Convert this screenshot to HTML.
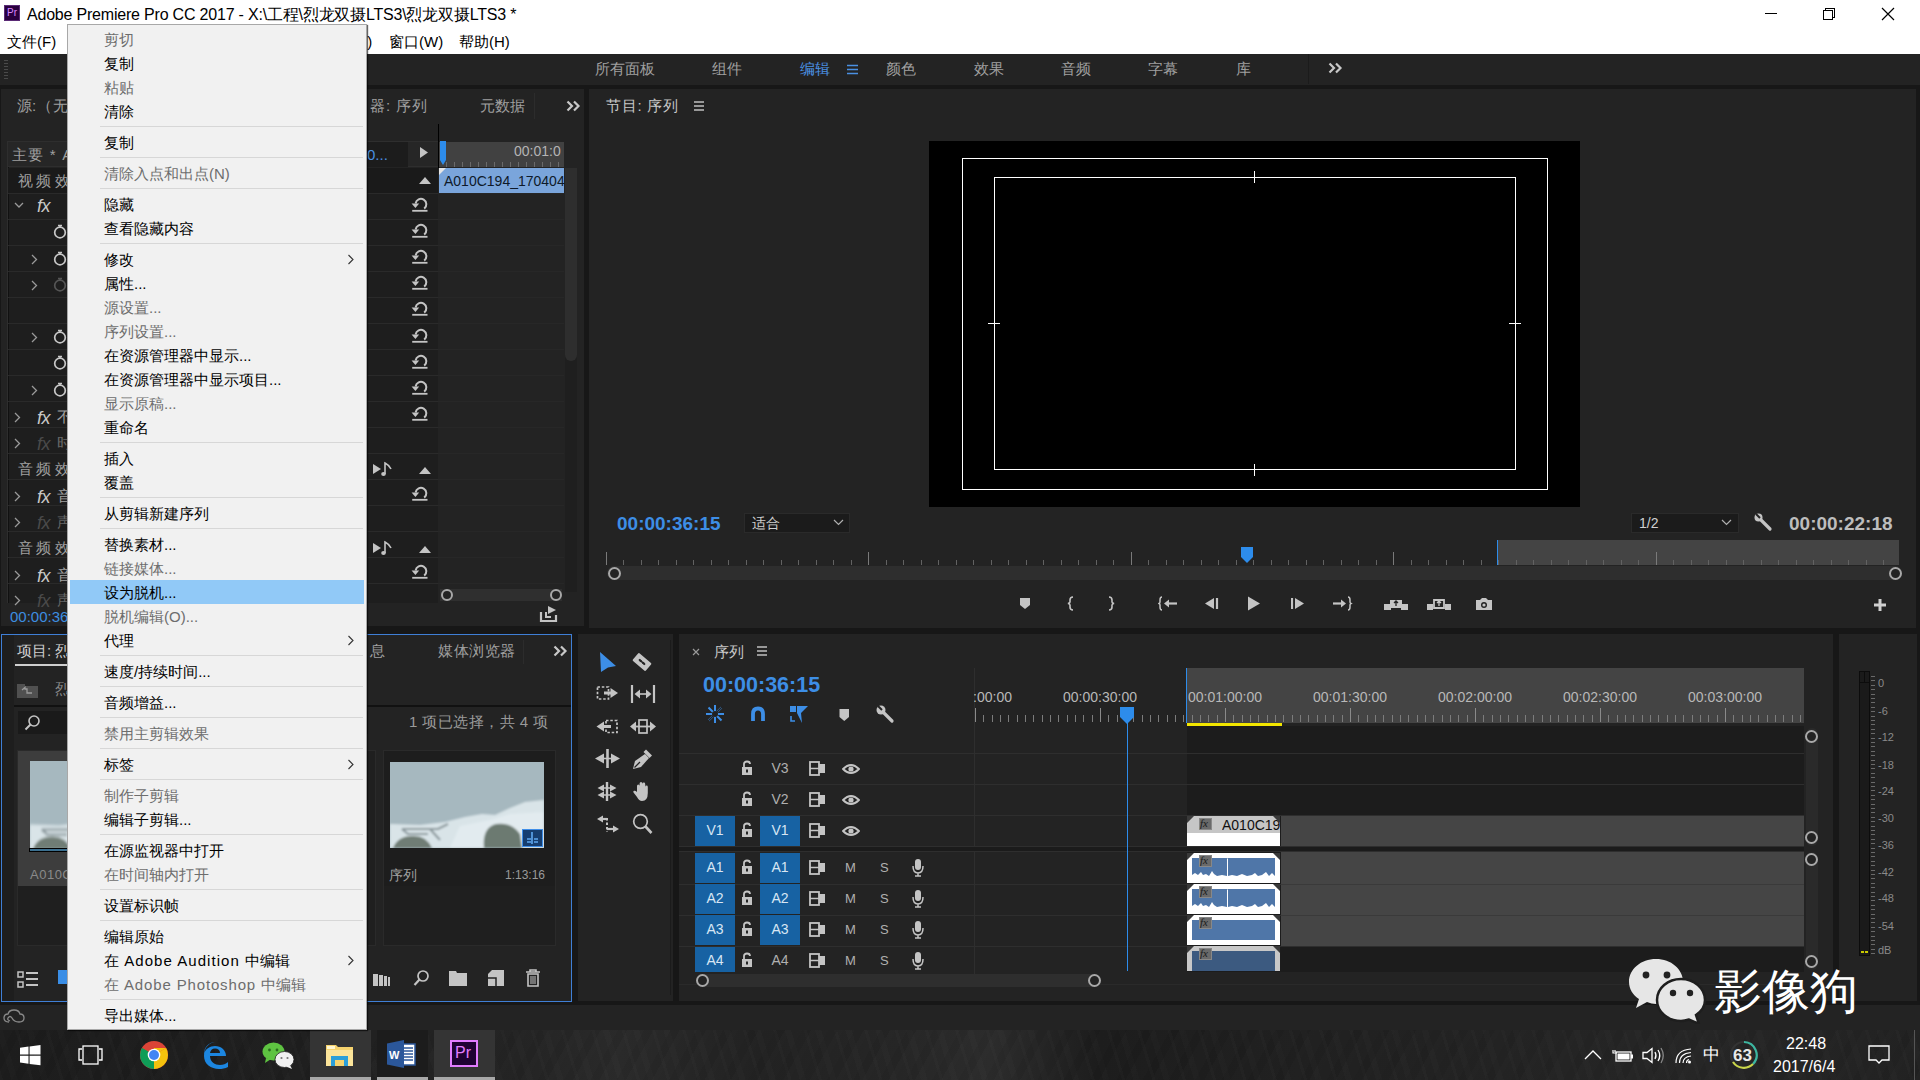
<!DOCTYPE html>
<html><head><meta charset="utf-8">
<style>
*{margin:0;padding:0;box-sizing:border-box}
html,body{width:1920px;height:1080px;overflow:hidden;background:#171717;font-family:"Liberation Sans",sans-serif;}
.a{position:absolute}
.t{position:absolute;white-space:nowrap;line-height:1}
.panel{position:absolute;background:#232323}
.g{color:#a9a9a9}
.mi{left:104px;font-size:15px;margin-top:1px}
</style></head><body>

<!-- title bar -->
<div class="a" style="left:0;top:0;width:1920px;height:54px;background:#fff"></div>
<div class="a" style="left:4px;top:5px;width:16px;height:16px;background:#2a003f;border:1px solid #5a2a75"></div>
<div class="t" style="left:7px;top:8px;font-size:10px;color:#d987ff">Pr</div>
<div class="t" style="left:27px;top:7px;font-size:16px;color:#000;letter-spacing:-0.2px">Adobe Premiere Pro CC 2017 - X:\工程\烈龙双摄LTS3\烈龙双摄LTS3 *</div>
<div class="t" style="left:7px;top:34px;font-size:15px;color:#000">文件(F)</div>
<div class="t" style="left:358px;top:34px;font-size:15px;color:#000">T)</div>
<div class="t" style="left:389px;top:34px;font-size:15px;color:#000">窗口(W)</div>
<div class="t" style="left:459px;top:34px;font-size:15px;color:#000">帮助(H)</div>
<!-- window buttons -->
<div class="a" style="left:1765px;top:13px;width:12px;height:1px;background:#000"></div>
<div class="a" style="left:1825px;top:8px;width:10px;height:10px;border:1px solid #000;background:#fff"></div>
<div class="a" style="left:1823px;top:10px;width:10px;height:10px;border:1px solid #000;background:#fff"></div>
<svg class="a" style="left:1881px;top:7px" width="14" height="14"><path d="M1 1L13 13M13 1L1 13" stroke="#000" stroke-width="1.2"/></svg>

<!-- workspace bar -->
<div class="a" style="left:0;top:54px;width:1920px;height:31px;background:#232323"></div>



<!-- workspace tabs -->
<div class="t g" style="left:595px;top:61px;font-size:15px;color:#a0a0a0;letter-spacing:0px">所有面板</div>
<div class="t g" style="left:712px;top:61px;font-size:15px;color:#a0a0a0">组件</div>
<div class="t" style="left:800px;top:61px;font-size:15px;color:#4a90e2">编辑</div>
<svg class="a" style="left:847px;top:64px" width="12" height="11"><path d="M0 1.5H11M0 5.5H11M0 9.5H11" stroke="#4a90e2" stroke-width="1.6"/></svg>
<div class="t g" style="left:886px;top:61px;font-size:15px;color:#a0a0a0">颜色</div>
<div class="t g" style="left:974px;top:61px;font-size:15px;color:#a0a0a0">效果</div>
<div class="t g" style="left:1061px;top:61px;font-size:15px;color:#a0a0a0">音频</div>
<div class="t g" style="left:1148px;top:61px;font-size:15px;color:#a0a0a0">字幕</div>
<div class="t g" style="left:1236px;top:61px;font-size:15px;color:#a0a0a0">库</div>
<div class="a" style="left:1308px;top:54px;width:1px;height:30px;background:#1b1b1b"></div>
<svg class="a" style="left:1328px;top:62px" width="15" height="12"><path d="M1.5 1.5L6 6L1.5 10.5M8 1.5L12.5 6L8 10.5" fill="none" stroke="#c8c8c8" stroke-width="2.2"/></svg>
<div class="a" style="left:4px;top:60px;width:4px;height:20px;background:repeating-linear-gradient(#4a4a4a 0 1px,transparent 1px 3px)"></div>

<!-- panels -->
<div class="panel" style="left:1px;top:89px;width:583px;height:537px"></div>
<div class="a" style="left:7px;top:141px;width:1px;height:462px;background:#2e2e2e"></div><div class="a" style="left:8px;top:141px;width:1px;height:462px;background:#111"></div>
<div class="panel" style="left:589px;top:89px;width:1327px;height:539px"></div>
<div class="panel" style="left:1px;top:634px;width:571px;height:368px;border:1px solid #3f7fd6"></div>
<div class="panel" style="left:578px;top:634px;width:95px;height:367px"></div>
<div class="panel" style="left:679px;top:634px;width:1154px;height:367px"></div>
<div class="panel" style="left:1839px;top:634px;width:78px;height:367px"></div>
<!-- status bar -->
<div class="a" style="left:0;top:1005px;width:1920px;height:25px;background:#232323"></div>
<!-- taskbar -->
<div class="a" style="left:0;top:1030px;width:1920px;height:50px;background:#1d1d1d"></div>
<!-- effect controls -->
<div class="t" style="left:17px;top:98px;font-size:15px;color:#a0a0a0">源</div><div class="t" style="left:32px;top:98px;font-size:15px;color:#a0a0a0">:</div><div class="t" style="left:37px;top:98px;font-size:15px;color:#a0a0a0">（</div><div class="t" style="left:53px;top:98px;font-size:15px;color:#a0a0a0">无</div>
<div class="t" style="left:370px;top:98px;font-size:15px;color:#a0a0a0;letter-spacing:1px">器: 序列</div>
<div class="t" style="left:480px;top:98px;font-size:15px;color:#a0a0a0">元数据</div>
<div class="a" style="left:534px;top:93px;width:1px;height:26px;background:#2c2c2c"></div>
<svg class="a" style="left:566px;top:100px" width="15" height="12"><path d="M1.5 1.5L6 6L1.5 10.5M8 1.5L12.5 6L8 10.5" fill="none" stroke="#c8c8c8" stroke-width="2.2"/></svg>
<div class="a" style="left:8px;top:141px;width:430px;height:26px;background:#262626;border-top:1px solid #2e2e2e;border-bottom:1px solid #2e2e2e"></div>
<div class="a" style="left:367px;top:142px;width:41px;height:25px;background:#1c1c1c"></div>
<div class="a" style="left:9px;top:168px;width:429px;height:435px;background:#1e1e1e"></div>
<div class="a" style="left:8px;top:193px;width:430px;height:1px;background:#2a2a2a"></div>
<div class="a" style="left:8px;top:219px;width:430px;height:1px;background:#2a2a2a"></div>
<div class="a" style="left:8px;top:245px;width:430px;height:1px;background:#2a2a2a"></div>
<div class="a" style="left:8px;top:271px;width:430px;height:1px;background:#2a2a2a"></div>
<div class="a" style="left:8px;top:297px;width:430px;height:1px;background:#2a2a2a"></div>
<div class="a" style="left:8px;top:323px;width:430px;height:1px;background:#2a2a2a"></div>
<div class="a" style="left:8px;top:349px;width:430px;height:1px;background:#2a2a2a"></div>
<div class="a" style="left:8px;top:375px;width:430px;height:1px;background:#2a2a2a"></div>
<div class="a" style="left:8px;top:401px;width:430px;height:1px;background:#2a2a2a"></div>
<div class="a" style="left:8px;top:427px;width:430px;height:1px;background:#2a2a2a"></div>
<div class="a" style="left:8px;top:453px;width:430px;height:1px;background:#2a2a2a"></div>
<div class="a" style="left:8px;top:479px;width:430px;height:1px;background:#2a2a2a"></div>
<div class="a" style="left:8px;top:505px;width:430px;height:1px;background:#2a2a2a"></div>
<div class="a" style="left:8px;top:531px;width:430px;height:1px;background:#2a2a2a"></div>
<div class="a" style="left:8px;top:557px;width:430px;height:1px;background:#2a2a2a"></div>
<div class="a" style="left:8px;top:583px;width:430px;height:1px;background:#2a2a2a"></div>

<div class="a" style="left:438px;top:193px;width:126px;height:1px;background:#272727"></div>
<div class="a" style="left:438px;top:219px;width:126px;height:1px;background:#272727"></div>
<div class="a" style="left:438px;top:245px;width:126px;height:1px;background:#272727"></div>
<div class="a" style="left:438px;top:271px;width:126px;height:1px;background:#272727"></div>
<div class="a" style="left:438px;top:297px;width:126px;height:1px;background:#272727"></div>
<div class="a" style="left:438px;top:323px;width:126px;height:1px;background:#272727"></div>
<div class="a" style="left:438px;top:349px;width:126px;height:1px;background:#272727"></div>
<div class="a" style="left:438px;top:375px;width:126px;height:1px;background:#272727"></div>
<div class="a" style="left:438px;top:401px;width:126px;height:1px;background:#272727"></div>
<div class="a" style="left:438px;top:427px;width:126px;height:1px;background:#272727"></div>
<div class="a" style="left:438px;top:453px;width:126px;height:1px;background:#272727"></div>
<div class="a" style="left:438px;top:479px;width:126px;height:1px;background:#272727"></div>
<div class="a" style="left:438px;top:505px;width:126px;height:1px;background:#272727"></div>
<div class="a" style="left:438px;top:531px;width:126px;height:1px;background:#272727"></div>
<div class="a" style="left:438px;top:557px;width:126px;height:1px;background:#272727"></div>
<div class="a" style="left:438px;top:583px;width:126px;height:1px;background:#272727"></div>
<div class="t" style="left:12px;top:147px;font-size:15px;color:#a0a0a0;letter-spacing:1.2px">主要 * A</div>
<div class="t" style="left:367px;top:147px;font-size:15px;color:#4a90e2">0...</div>
<svg class="a" style="left:420px;top:147px" width="9" height="11"><path d="M0 0L8 5.5L0 11Z" fill="#c4c4c4"/></svg>
<div class="a" style="left:8px;top:168px;width:430px;height:25px;background:#1a1a1a"></div>
<div class="t" style="left:18px;top:173px;font-size:15px;color:#a0a0a0;letter-spacing:3.4px">视频效果</div>
<svg class="a" style="left:14px;top:202px" width="10" height="7"><path d="M1 1L5 5L9 1" fill="none" stroke="#9a9a9a" stroke-width="1.3"/></svg>
<div class="t" style="left:37px;top:197px;font-size:18px;font-style:italic;color:#c8c8c8;letter-spacing:-0.5px">fx</div>
<svg class="a" style="left:53px;top:224px" width="14" height="15"><circle cx="7" cy="8.5" r="5.3" fill="none" stroke="#c8c8c8" stroke-width="1.7"/><path d="M5 1.5H9M7 1.5V3.5" stroke="#c8c8c8" stroke-width="1.5"/></svg>
<svg class="a" style="left:53px;top:251px" width="14" height="15"><circle cx="7" cy="8.5" r="5.3" fill="none" stroke="#c8c8c8" stroke-width="1.7"/><path d="M5 1.5H9M7 1.5V3.5" stroke="#c8c8c8" stroke-width="1.5"/></svg>
<svg class="a" style="left:53px;top:277px" width="14" height="15"><circle cx="7" cy="8.5" r="5.3" fill="none" stroke="#555" stroke-width="1.7"/><path d="M5 1.5H9M7 1.5V3.5" stroke="#555" stroke-width="1.5"/></svg>
<svg class="a" style="left:53px;top:329px" width="14" height="15"><circle cx="7" cy="8.5" r="5.3" fill="none" stroke="#c8c8c8" stroke-width="1.7"/><path d="M5 1.5H9M7 1.5V3.5" stroke="#c8c8c8" stroke-width="1.5"/></svg>
<svg class="a" style="left:53px;top:355px" width="14" height="15"><circle cx="7" cy="8.5" r="5.3" fill="none" stroke="#c8c8c8" stroke-width="1.7"/><path d="M5 1.5H9M7 1.5V3.5" stroke="#c8c8c8" stroke-width="1.5"/></svg>
<svg class="a" style="left:53px;top:382px" width="14" height="15"><circle cx="7" cy="8.5" r="5.3" fill="none" stroke="#c8c8c8" stroke-width="1.7"/><path d="M5 1.5H9M7 1.5V3.5" stroke="#c8c8c8" stroke-width="1.5"/></svg>
<svg class="a" style="left:31px;top:254px" width="7" height="11"><path d="M1 1L5.5 5.5L1 10" fill="none" stroke="#9a9a9a" stroke-width="1.3"/></svg>
<svg class="a" style="left:31px;top:280px" width="7" height="11"><path d="M1 1L5.5 5.5L1 10" fill="none" stroke="#9a9a9a" stroke-width="1.3"/></svg>
<svg class="a" style="left:31px;top:332px" width="7" height="11"><path d="M1 1L5.5 5.5L1 10" fill="none" stroke="#9a9a9a" stroke-width="1.3"/></svg>
<svg class="a" style="left:31px;top:385px" width="7" height="11"><path d="M1 1L5.5 5.5L1 10" fill="none" stroke="#9a9a9a" stroke-width="1.3"/></svg>
<svg class="a" style="left:14px;top:412px" width="7" height="11"><path d="M1 1L5.5 5.5L1 10" fill="none" stroke="#9a9a9a" stroke-width="1.3"/></svg>
<div class="t" style="left:37px;top:409px;font-size:18px;font-style:italic;color:#c8c8c8;letter-spacing:-0.5px">fx</div>
<div class="t" style="left:57px;top:409px;font-size:15px;color:#a0a0a0">不</div>
<svg class="a" style="left:14px;top:438px" width="7" height="11"><path d="M1 1L5.5 5.5L1 10" fill="none" stroke="#9a9a9a" stroke-width="1.3"/></svg>
<div class="t" style="left:37px;top:435px;font-size:18px;font-style:italic;color:#4a4a4a;letter-spacing:-0.5px">fx</div>
<div class="t" style="left:57px;top:435px;font-size:15px;color:#666">时</div>
<svg class="a" style="left:14px;top:491px" width="7" height="11"><path d="M1 1L5.5 5.5L1 10" fill="none" stroke="#9a9a9a" stroke-width="1.3"/></svg>
<div class="t" style="left:37px;top:488px;font-size:18px;font-style:italic;color:#c8c8c8;letter-spacing:-0.5px">fx</div>
<div class="t" style="left:57px;top:488px;font-size:15px;color:#a0a0a0">音</div>
<svg class="a" style="left:14px;top:517px" width="7" height="11"><path d="M1 1L5.5 5.5L1 10" fill="none" stroke="#9a9a9a" stroke-width="1.3"/></svg>
<div class="t" style="left:37px;top:514px;font-size:18px;font-style:italic;color:#4a4a4a;letter-spacing:-0.5px">fx</div>
<div class="t" style="left:57px;top:514px;font-size:15px;color:#666">声</div>
<svg class="a" style="left:14px;top:570px" width="7" height="11"><path d="M1 1L5.5 5.5L1 10" fill="none" stroke="#9a9a9a" stroke-width="1.3"/></svg>
<div class="t" style="left:37px;top:567px;font-size:18px;font-style:italic;color:#c8c8c8;letter-spacing:-0.5px">fx</div>
<div class="t" style="left:57px;top:567px;font-size:15px;color:#a0a0a0">音</div>
<svg class="a" style="left:14px;top:595px" width="7" height="11"><path d="M1 1L5.5 5.5L1 10" fill="none" stroke="#9a9a9a" stroke-width="1.3"/></svg>
<div class="t" style="left:37px;top:592px;font-size:18px;font-style:italic;color:#4a4a4a;letter-spacing:-0.5px">fx</div>
<div class="t" style="left:57px;top:592px;font-size:15px;color:#666">声</div>
<div class="t" style="left:18px;top:461px;font-size:15px;color:#a0a0a0;letter-spacing:3.4px">音频效果</div>
<div class="t" style="left:18px;top:540px;font-size:15px;color:#a0a0a0;letter-spacing:3.4px">音频效果</div>
<svg class="a" style="left:419px;top:176px" width="12" height="8"><path d="M0 8L6 1L12 8Z" fill="#c4c4c4"/></svg>
<svg class="a" style="left:410px;top:197px" width="18" height="16"><path d="M5.6 6.5A5.4 5.4 0 1 1 14.2 11.6" fill="none" stroke="#c4c4c4" stroke-width="2"/><path d="M1.6 6.4L9.2 6.4L5.4 11Z" fill="#c4c4c4"/><path d="M2.2 13.8H17.5" stroke="#c4c4c4" stroke-width="1.8"/></svg>
<svg class="a" style="left:410px;top:223px" width="18" height="16"><path d="M5.6 6.5A5.4 5.4 0 1 1 14.2 11.6" fill="none" stroke="#c4c4c4" stroke-width="2"/><path d="M1.6 6.4L9.2 6.4L5.4 11Z" fill="#c4c4c4"/><path d="M2.2 13.8H17.5" stroke="#c4c4c4" stroke-width="1.8"/></svg>
<svg class="a" style="left:410px;top:249px" width="18" height="16"><path d="M5.6 6.5A5.4 5.4 0 1 1 14.2 11.6" fill="none" stroke="#c4c4c4" stroke-width="2"/><path d="M1.6 6.4L9.2 6.4L5.4 11Z" fill="#c4c4c4"/><path d="M2.2 13.8H17.5" stroke="#c4c4c4" stroke-width="1.8"/></svg>
<svg class="a" style="left:410px;top:275px" width="18" height="16"><path d="M5.6 6.5A5.4 5.4 0 1 1 14.2 11.6" fill="none" stroke="#c4c4c4" stroke-width="2"/><path d="M1.6 6.4L9.2 6.4L5.4 11Z" fill="#c4c4c4"/><path d="M2.2 13.8H17.5" stroke="#c4c4c4" stroke-width="1.8"/></svg>
<svg class="a" style="left:410px;top:301px" width="18" height="16"><path d="M5.6 6.5A5.4 5.4 0 1 1 14.2 11.6" fill="none" stroke="#c4c4c4" stroke-width="2"/><path d="M1.6 6.4L9.2 6.4L5.4 11Z" fill="#c4c4c4"/><path d="M2.2 13.8H17.5" stroke="#c4c4c4" stroke-width="1.8"/></svg>
<svg class="a" style="left:410px;top:328px" width="18" height="16"><path d="M5.6 6.5A5.4 5.4 0 1 1 14.2 11.6" fill="none" stroke="#c4c4c4" stroke-width="2"/><path d="M1.6 6.4L9.2 6.4L5.4 11Z" fill="#c4c4c4"/><path d="M2.2 13.8H17.5" stroke="#c4c4c4" stroke-width="1.8"/></svg>
<svg class="a" style="left:410px;top:354px" width="18" height="16"><path d="M5.6 6.5A5.4 5.4 0 1 1 14.2 11.6" fill="none" stroke="#c4c4c4" stroke-width="2"/><path d="M1.6 6.4L9.2 6.4L5.4 11Z" fill="#c4c4c4"/><path d="M2.2 13.8H17.5" stroke="#c4c4c4" stroke-width="1.8"/></svg>
<svg class="a" style="left:410px;top:380px" width="18" height="16"><path d="M5.6 6.5A5.4 5.4 0 1 1 14.2 11.6" fill="none" stroke="#c4c4c4" stroke-width="2"/><path d="M1.6 6.4L9.2 6.4L5.4 11Z" fill="#c4c4c4"/><path d="M2.2 13.8H17.5" stroke="#c4c4c4" stroke-width="1.8"/></svg>
<svg class="a" style="left:410px;top:406px" width="18" height="16"><path d="M5.6 6.5A5.4 5.4 0 1 1 14.2 11.6" fill="none" stroke="#c4c4c4" stroke-width="2"/><path d="M1.6 6.4L9.2 6.4L5.4 11Z" fill="#c4c4c4"/><path d="M2.2 13.8H17.5" stroke="#c4c4c4" stroke-width="1.8"/></svg>
<svg class="a" style="left:410px;top:486px" width="18" height="16"><path d="M5.6 6.5A5.4 5.4 0 1 1 14.2 11.6" fill="none" stroke="#c4c4c4" stroke-width="2"/><path d="M1.6 6.4L9.2 6.4L5.4 11Z" fill="#c4c4c4"/><path d="M2.2 13.8H17.5" stroke="#c4c4c4" stroke-width="1.8"/></svg>
<svg class="a" style="left:410px;top:564px" width="18" height="16"><path d="M5.6 6.5A5.4 5.4 0 1 1 14.2 11.6" fill="none" stroke="#c4c4c4" stroke-width="2"/><path d="M1.6 6.4L9.2 6.4L5.4 11Z" fill="#c4c4c4"/><path d="M2.2 13.8H17.5" stroke="#c4c4c4" stroke-width="1.8"/></svg>
<svg class="a" style="left:419px;top:466px" width="12" height="8"><path d="M0 8L6 1L12 8Z" fill="#c4c4c4"/></svg>
<svg class="a" style="left:373px;top:461px" width="20" height="16"><path d="M0 3L8 8L0 13Z" fill="#c4c4c4"/><path d="M12 13V2Q16 4 18 8" fill="none" stroke="#c4c4c4" stroke-width="1.6"/><ellipse cx="10.5" cy="13" rx="2.3" ry="2" fill="#c4c4c4"/></svg>
<svg class="a" style="left:419px;top:545px" width="12" height="8"><path d="M0 8L6 1L12 8Z" fill="#c4c4c4"/></svg>
<svg class="a" style="left:373px;top:540px" width="20" height="16"><path d="M0 3L8 8L0 13Z" fill="#c4c4c4"/><path d="M12 13V2Q16 4 18 8" fill="none" stroke="#c4c4c4" stroke-width="1.6"/><ellipse cx="10.5" cy="13" rx="2.3" ry="2" fill="#c4c4c4"/></svg>
<div class="a" style="left:438px;top:142px;width:126px;height:25px;background:#414141"></div>
<div class="a" style="left:438px;top:162px;width:126px;height:5px;background:repeating-linear-gradient(90deg,#6a6a6a 0 1px,transparent 1px 8px)"></div>
<div class="t" style="left:514px;top:144px;font-size:14px;color:#b4b4b4">00:01:0</div>
<div class="a" style="left:438px;top:124px;width:1px;height:44px;background:#000"></div>
<svg class="a" style="left:439px;top:141px" width="8" height="25"><path d="M1 0H7V19L4 24L1 19Z" fill="#2d8ceb"/></svg>
<div class="a" style="left:439px;top:168px;width:125px;height:25px;background:#7aa5db"></div>
<svg class="a" style="left:439px;top:168px" width="8" height="8"><path d="M0 0H7L0 7Z" fill="#e6e6e6"/></svg>
<div class="t" style="left:444px;top:174px;font-size:14px;color:#0e1a2a">A010C194_170404</div>
<div class="a" style="left:565px;top:168px;width:12px;height:424px;background:#1f1f1f"></div>
<div class="a" style="left:565px;top:168px;width:12px;height:193px;background:#2e2e2e;border-radius:0 0 6px 6px"></div>
<div class="a" style="left:440px;top:589px;width:122px;height:12px;background:#2f2f2f"></div>
<div class="a" style="left:441px;top:589px;width:12px;height:12px;border:2px solid #a8a8a8;border-radius:50%;background:#232323"></div>
<div class="a" style="left:550px;top:589px;width:12px;height:12px;border:2px solid #a8a8a8;border-radius:50%;background:#232323"></div>
<svg class="a" style="left:539px;top:604px" width="19" height="19"><path d="M2 8V17H17V11" fill="none" stroke="#c4c4c4" stroke-width="2.2"/><path d="M9 2L17 6L9 10Z" fill="#c4c4c4"/><path d="M7 8V13H12" fill="none" stroke="#c4c4c4" stroke-width="2"/></svg>
<div class="t" style="left:10px;top:609px;font-size:15px;color:#3d8ee0">00:00:36:15</div>
<!-- project panel -->
<div class="a" style="left:2px;top:635px;width:12px;height:366px;background:#1e1e1e"></div>
<div class="t" style="left:17px;top:643px;font-size:15px;color:#d0d0d0">项目: 烈</div>
<div class="a" style="left:15px;top:664px;width:60px;height:2px;background:#cfcfcf"></div>
<div class="t" style="left:370px;top:643px;font-size:15px;color:#a0a0a0">息</div>
<div class="t" style="left:438px;top:643px;font-size:15px;color:#a0a0a0;letter-spacing:0.6px">媒体浏览器</div>
<div class="a" style="left:523px;top:640px;width:1px;height:24px;background:#2c2c2c"></div>
<svg class="a" style="left:553px;top:645px" width="15" height="12"><path d="M1.5 1.5L6 6L1.5 10.5M8 1.5L12.5 6L8 10.5" fill="none" stroke="#c8c8c8" stroke-width="2.2"/></svg>
<svg class="a" style="left:17px;top:682px" width="21" height="16"><path d="M0 2H8V4H21V16H0Z" fill="#505050"/><path d="M5 8L8 5.5V7H10V11H15" fill="none" stroke="#9a9a9a" stroke-width="1.3"/></svg>
<div class="t" style="left:55px;top:681px;font-size:15px;color:#8a8a8a">烈</div>
<div class="a" style="left:14px;top:705px;width:557px;height:2px;background:#111"></div>
<div class="a" style="left:18px;top:711px;width:350px;height:23px;background:#1a1a1a"></div>
<svg class="a" style="left:24px;top:714px" width="17" height="17"><circle cx="10" cy="7" r="5" fill="none" stroke="#c4c4c4" stroke-width="1.6"/><path d="M6.5 10.5L1.5 15.5" stroke="#c4c4c4" stroke-width="2"/></svg>
<div class="t" style="left:409px;top:714px;font-size:15px;color:#9a9a9a;letter-spacing:0.45px">1 项已选择，共 4 项</div>
<div class="a" style="left:17px;top:750px;width:175px;height:196px;border:1px solid #2a2a2a;background:#1f1f1f"></div>
<div class="a" style="left:18px;top:751px;width:173px;height:135px;background:#3d3d3d"></div>
<div class="a" style="left:200px;top:750px;width:176px;height:196px;border:1px solid #2a2a2a;background:#1f1f1f"></div>


<svg class="a" style="left:30px;top:761px" width="150" height="88" viewBox="0 0 154 86" preserveAspectRatio="none"><defs><filter id="bl" x="0" y="0" width="1" height="1"><feGaussianBlur stdDeviation="1.3"/></filter></defs><g filter="url(#bl)"><rect x="-5" y="-5" width="164" height="96" fill="#a6b8bf"/><path d="M0 62L30 63L55 60L75 55L92 52L105 53L120 46L135 40L154 38V86H0Z" fill="#d9e4e8"/><path d="M60 86L70 64L100 58L120 52L154 50V86Z" fill="#e2ebef"/><path d="M12 67H48L58 62M40 67L50 78M12 67L18 72H38" fill="none" stroke="#8a979b" stroke-width="2.2"/><path d="M3 86Q8 74 22 74Q36 73 42 86Z" fill="#6f7d74"/><path d="M94 86Q92 66 106 62Q122 60 130 72L132 86Z" fill="#6c7a71"/></g></svg><div class="a" style="left:29px;top:848px;width:152px;height:4px;background:#3b6f8f;border:1px solid #000"></div>
<div class="t" style="left:30px;top:868px;font-size:13px;color:#8a8a8a;letter-spacing:0.5px">A010C1</div>
<div class="a" style="left:383px;top:750px;width:173px;height:196px;border:1px solid #2a2a2a;background:#1f1f1f"></div>
<div class="a" style="left:384px;top:751px;width:171px;height:135px;background:#1d1d1d"></div>





<svg class="a" style="left:390px;top:762px" width="154" height="86" viewBox="0 0 154 86" preserveAspectRatio="none"><defs><filter id="bl" x="0" y="0" width="1" height="1"><feGaussianBlur stdDeviation="1.3"/></filter></defs><g filter="url(#bl)"><rect x="-5" y="-5" width="164" height="96" fill="#a6b8bf"/><path d="M0 62L30 63L55 60L75 55L92 52L105 53L120 46L135 40L154 38V86H0Z" fill="#d9e4e8"/><path d="M60 86L70 64L100 58L120 52L154 50V86Z" fill="#e2ebef"/><path d="M12 67H48L58 62M40 67L50 78M12 67L18 72H38" fill="none" stroke="#8a979b" stroke-width="2.2"/><path d="M3 86Q8 74 22 74Q36 73 42 86Z" fill="#6f7d74"/><path d="M94 86Q92 66 106 62Q122 60 130 72L132 86Z" fill="#6c7a71"/></g></svg><div class="a" style="left:522px;top:829px;width:21px;height:18px;background:#163e70;border:1px solid #3f8ee8"></div><svg class="a" style="left:525px;top:832px" width="15" height="12"><path d="M7 0V12M2 7H6M9 7H13M2 10H6M9 10H13" stroke="#5fa8f0" stroke-width="1.6"/></svg><div class="t" style="left:389px;top:868px;font-size:14px;color:#a0a0a0">序列</div>
<div class="t" style="left:505px;top:869px;font-size:12px;color:#9a9a9a">1:13:16</div>
<svg class="a" style="left:17px;top:971px" width="22" height="17"><rect x="1" y="1" width="5" height="5" fill="none" stroke="#c4c4c4" stroke-width="1.5"/><rect x="1" y="11" width="5" height="5" fill="none" stroke="#c4c4c4" stroke-width="1.5"/><path d="M9 2H21M9 8H21M9 14H21" stroke="#c4c4c4" stroke-width="2"/></svg>
<div class="a" style="left:58px;top:970px;width:9px;height:14px;background:#3a8ee6"></div>
<svg class="a" style="left:373px;top:972px" width="20" height="14"><path d="M0 2H5V14H0ZM6 3H10V14H6ZM11 4H14V14H11ZM15 5H17V14H15Z" fill="#c4c4c4"/></svg>
<svg class="a" style="left:413px;top:969px" width="17" height="18"><circle cx="10" cy="7" r="5" fill="none" stroke="#c4c4c4" stroke-width="1.7"/><path d="M6.5 10.5L1.5 16" stroke="#c4c4c4" stroke-width="2.2"/></svg>
<svg class="a" style="left:449px;top:971px" width="18" height="15"><path d="M0 0H7L8 2H18V15H0Z" fill="#c4c4c4"/></svg>
<svg class="a" style="left:488px;top:970px" width="16" height="16"><path d="M4 0H16V16H0V4Z" fill="#c4c4c4"/><path d="M0 8H8V16" fill="none" stroke="#232323" stroke-width="1.5"/></svg>
<svg class="a" style="left:525px;top:969px" width="16" height="18"><path d="M1 3H15M5 3V1H11V3" fill="none" stroke="#c4c4c4" stroke-width="1.6"/><path d="M3 5H13V17H3Z" fill="none" stroke="#c4c4c4" stroke-width="1.6"/><path d="M6 7V15M8 7V15M10 7V15" stroke="#c4c4c4" stroke-width="1"/></svg>
<svg class="a" style="left:3px;top:1009px" width="22" height="15"><path d="M6 13Q1 13 1 9Q1 5 5 5Q6 1 11 1Q16 1 17 5Q21 5 21 9Q21 13 16 13Q11 13 9 9Q7 6 5 9Q4 11 7 12" fill="none" stroke="#8a8a8a" stroke-width="1.3"/></svg>
<!-- tools+timeline -->
<div class="a" style="left:670px;top:640px;width:1px;height:355px;background:#1b1b1b"></div>
<svg class="a" style="left:598px;top:650px" width="27" height="23"><path d="M2 2L18 16L10 17.5L3 22Z" fill="#3d8ee6"/></svg>
<svg class="a" style="left:632px;top:652px" width="27" height="23"><g transform="rotate(40 10 10)"><rect x="1.5" y="5" width="17" height="10" rx="1" fill="#c4c4c4"/><path d="M6 10H14" stroke="#232323" stroke-width="1.6"/><path d="M8 9V11M12 9V11" stroke="#232323" stroke-width="2.5"/></g></svg>
<svg class="a" style="left:596px;top:684px" width="27" height="23"><rect x="1.5" y="3" width="11" height="12" fill="none" stroke="#c4c4c4" stroke-width="1.7" stroke-dasharray="2.5 1.8"/><path d="M8 9H16" stroke="#c4c4c4" stroke-width="3"/><path d="M14.5 4L22 9L14.5 14Z" fill="#c4c4c4"/></svg>
<svg class="a" style="left:630px;top:684px" width="27" height="23"><path d="M2 1V19M24 1V19" stroke="#c4c4c4" stroke-width="2.2"/><path d="M7 10H19" stroke="#c4c4c4" stroke-width="1.6"/><path d="M4.5 10L10 5.5V14.5ZM21.5 10L16 5.5V14.5Z" fill="#c4c4c4"/></svg>
<svg class="a" style="left:596px;top:718px" width="27" height="23"><rect x="10" y="2.5" width="11" height="12" fill="none" stroke="#c4c4c4" stroke-width="1.7" stroke-dasharray="2.5 1.8"/><path d="M6 8.5H15" stroke="#c4c4c4" stroke-width="3"/><path d="M0.5 8.5L8 3.5V13.5Z" fill="#c4c4c4"/></svg>
<svg class="a" style="left:630px;top:718px" width="27" height="23"><rect x="9" y="2" width="8" height="13" fill="none" stroke="#c4c4c4" stroke-width="1.7"/><path d="M4 8.5H22" stroke="#c4c4c4" stroke-width="1.8"/><path d="M0 8.5L6 3.5V13.5ZM26 8.5L20 3.5V13.5Z" fill="#c4c4c4"/></svg>
<svg class="a" style="left:595px;top:748px" width="27" height="23"><path d="M12.5 1V20" stroke="#c4c4c4" stroke-width="2.6"/><path d="M3 10.5H22" stroke="#c4c4c4" stroke-width="1.6"/><path d="M0 10.5L9 5.5V15.5ZM25 10.5L16 5.5V15.5Z" fill="#c4c4c4"/></svg>
<svg class="a" style="left:632px;top:748px" width="27" height="23"><path d="M13 6L17 10L9 19L1 21L3 13Z" fill="#c4c4c4"/><path d="M14 1.5L20 7.5L17.5 10L11.5 4Z" fill="#c4c4c4"/><path d="M2.5 19.5L8 14" stroke="#232323" stroke-width="1.3"/></svg>
<svg class="a" style="left:597px;top:782px" width="27" height="23"><path d="M10 0V19" stroke="#c4c4c4" stroke-width="2.4"/><path d="M3 6H17M3 13H17" stroke="#c4c4c4" stroke-width="1.5"/><path d="M0.5 6L7 2.5V9.5ZM19.5 6L13 2.5V9.5ZM0.5 13L7 9.5V16.5ZM19.5 13L13 9.5V16.5Z" fill="#c4c4c4"/></svg>
<svg class="a" style="left:632px;top:781px" width="27" height="23"><path d="M5 11V5Q5 3.5 6.3 3.5Q7.6 3.5 7.6 5V10V2.5Q7.6 1 9 1Q10.4 1 10.4 2.5V10V3Q10.4 1.6 11.8 1.6Q13.2 1.6 13.2 3V10.5V6Q13.2 4.6 14.5 4.6Q15.8 4.6 15.8 6V12Q15.8 20 10 20Q7 20 5 16L1.5 11.5Q0.8 10 2.2 9.8Q3.5 9.6 5 11Z" fill="#c4c4c4"/></svg>
<svg class="a" style="left:596px;top:814px" width="27" height="23"><path d="M1 5L7 1.5V8.5Z" fill="#c4c4c4"/><path d="M6 5H11" stroke="#c4c4c4" stroke-width="2.2"/><path d="M11 4V18" stroke="#c4c4c4" stroke-width="2" stroke-dasharray="2.5 2"/><path d="M11 15H18" stroke="#c4c4c4" stroke-width="2.2"/><path d="M23 15L17 11.5V18.5Z" fill="#c4c4c4"/></svg>
<svg class="a" style="left:632px;top:813px" width="27" height="23"><circle cx="8.5" cy="8.5" r="6.8" fill="none" stroke="#c4c4c4" stroke-width="1.7"/><path d="M13.5 13.5L19.5 20" stroke="#c4c4c4" stroke-width="2.6"/></svg>
<svg class="a" style="left:692px;top:648px" width="8" height="8"><path d="M1 1L7 7M7 1L1 7" stroke="#9a9a9a" stroke-width="1.2"/></svg>
<div class="t" style="left:714px;top:644px;font-size:15px;color:#c8c8c8">序列</div>
<svg class="a" style="left:757px;top:646px" width="11" height="10"><path d="M0 1H10M0 5H10M0 9H10" stroke="#c0c0c0" stroke-width="1.6"/></svg>
<div class="t" style="left:703px;top:675px;font-size:21.5px;font-weight:bold;color:#3d8ee6">00:00:36:15</div>
<svg class="a" style="left:705px;top:704px" width="20" height="20"><path d="M10 1V19M1 10H19M3.5 3.5L16.5 16.5M16.5 3.5L3.5 16.5" stroke="#3d8ee6" stroke-width="2"/><circle cx="10" cy="10" r="3" fill="#232323"/><path d="M2 18L18 2" stroke="#232323" stroke-width="1.5"/></svg>
<svg class="a" style="left:748px;top:704px" width="20" height="20"><path d="M5 17V10Q5 4.5 10 4.5Q15 4.5 15 10V17" fill="none" stroke="#3d8ee6" stroke-width="3.8"/></svg>
<svg class="a" style="left:789px;top:704px" width="20" height="20"><path d="M1 2H7V8H1ZM1 11H6" fill="#3d8ee6"/><path d="M2 12V17H6" fill="none" stroke="#3d8ee6" stroke-width="1.6"/><path d="M8 2L19 2L12 9L13 19L8 9Z" fill="#3d8ee6"/></svg>
<svg class="a" style="left:835px;top:704px" width="20" height="20"><path d="M4.5 5H14V13L9.25 17L4.5 13Z" fill="#c4c4c4"/></svg>
<svg class="a" style="left:875px;top:704px" width="20" height="20"><path d="M6 6L17 17" stroke="#c4c4c4" stroke-width="3.2" stroke-linecap="round"/><circle cx="6" cy="6" r="4.5" fill="#c4c4c4"/><path d="M3 2L7 6" stroke="#232323" stroke-width="2"/></svg>
<div class="a" style="left:974px;top:668px;width:1px;height:310px;background:#2e2e2e"></div>
<div class="a" style="left:1187px;top:726px;width:617px;height:246px;background:#1c1c1c"></div>
<div class="a" style="left:1186px;top:668px;width:618px;height:55px;background:#444"></div>
<div class="a" style="left:1186px;top:668px;width:1px;height:55px;background:#2d8ceb"></div>
<div class="a" style="left:679px;top:753px;width:1125px;height:1px;background:#2e2e2e"></div>
<div class="a" style="left:679px;top:784px;width:1125px;height:1px;background:#2e2e2e"></div>
<div class="a" style="left:679px;top:815px;width:1125px;height:1px;background:#2e2e2e"></div>
<div class="a" style="left:679px;top:846px;width:1125px;height:1px;background:#2e2e2e"></div>
<div class="a" style="left:679px;top:851px;width:1125px;height:1px;background:#2e2e2e"></div>
<div class="a" style="left:679px;top:884px;width:1125px;height:1px;background:#2e2e2e"></div>
<div class="a" style="left:679px;top:915px;width:1125px;height:1px;background:#2e2e2e"></div>
<div class="a" style="left:679px;top:946px;width:1125px;height:1px;background:#2e2e2e"></div>
<div class="a" style="left:679px;top:847px;width:1125px;height:4px;background:#1b1b1b"></div>
<div class="a" style="left:1281px;top:816px;width:523px;height:30px;background:#454545"></div>
<div class="a" style="left:1281px;top:852px;width:523px;height:94px;background:#454545"></div>
<div class="a" style="left:1281px;top:884px;width:523px;height:1px;background:#3a3a3a"></div>
<div class="a" style="left:1281px;top:915px;width:523px;height:1px;background:#3a3a3a"></div>
<div class="a" style="left:679px;top:984px;width:1125px;height:1px;background:#2a2a2a"></div>
<div class="t" style="left:937px;top:690px;font-size:14px;color:#b8b8b8;width:76px;text-align:center">00:00:00:00</div>
<div class="t" style="left:1062px;top:690px;font-size:14px;color:#b8b8b8;width:76px;text-align:center">00:00:30:00</div>
<div class="t" style="left:1187px;top:690px;font-size:14px;color:#b8b8b8;width:76px;text-align:center">00:01:00:00</div>
<div class="t" style="left:1312px;top:690px;font-size:14px;color:#b8b8b8;width:76px;text-align:center">00:01:30:00</div>
<div class="t" style="left:1437px;top:690px;font-size:14px;color:#b8b8b8;width:76px;text-align:center">00:02:00:00</div>
<div class="t" style="left:1562px;top:690px;font-size:14px;color:#b8b8b8;width:76px;text-align:center">00:02:30:00</div>
<div class="t" style="left:1687px;top:690px;font-size:14px;color:#b8b8b8;width:76px;text-align:center">00:03:00:00</div>
<div class="a" style="left:900px;top:668px;width:74px;height:40px;background:#232323"></div>
<div class="a" style="left:975px;top:708px;width:1px;height:14px;background:#8a8a8a"></div>
<div class="a" style="left:983px;top:715px;width:1px;height:7px;background:#7c7c7c"></div>
<div class="a" style="left:992px;top:715px;width:1px;height:7px;background:#7c7c7c"></div>
<div class="a" style="left:1000px;top:715px;width:1px;height:7px;background:#7c7c7c"></div>
<div class="a" style="left:1008px;top:715px;width:1px;height:7px;background:#7c7c7c"></div>
<div class="a" style="left:1017px;top:715px;width:1px;height:7px;background:#7c7c7c"></div>
<div class="a" style="left:1025px;top:715px;width:1px;height:7px;background:#7c7c7c"></div>
<div class="a" style="left:1033px;top:715px;width:1px;height:7px;background:#7c7c7c"></div>
<div class="a" style="left:1042px;top:715px;width:1px;height:7px;background:#7c7c7c"></div>
<div class="a" style="left:1050px;top:715px;width:1px;height:7px;background:#7c7c7c"></div>
<div class="a" style="left:1058px;top:715px;width:1px;height:7px;background:#7c7c7c"></div>
<div class="a" style="left:1067px;top:715px;width:1px;height:7px;background:#7c7c7c"></div>
<div class="a" style="left:1075px;top:715px;width:1px;height:7px;background:#7c7c7c"></div>
<div class="a" style="left:1083px;top:715px;width:1px;height:7px;background:#7c7c7c"></div>
<div class="a" style="left:1092px;top:715px;width:1px;height:7px;background:#7c7c7c"></div>
<div class="a" style="left:1100px;top:708px;width:1px;height:14px;background:#8a8a8a"></div>
<div class="a" style="left:1108px;top:715px;width:1px;height:7px;background:#7c7c7c"></div>
<div class="a" style="left:1117px;top:715px;width:1px;height:7px;background:#7c7c7c"></div>
<div class="a" style="left:1125px;top:715px;width:1px;height:7px;background:#7c7c7c"></div>
<div class="a" style="left:1133px;top:715px;width:1px;height:7px;background:#7c7c7c"></div>
<div class="a" style="left:1142px;top:715px;width:1px;height:7px;background:#7c7c7c"></div>
<div class="a" style="left:1150px;top:715px;width:1px;height:7px;background:#7c7c7c"></div>
<div class="a" style="left:1158px;top:715px;width:1px;height:7px;background:#7c7c7c"></div>
<div class="a" style="left:1167px;top:715px;width:1px;height:7px;background:#7c7c7c"></div>
<div class="a" style="left:1175px;top:715px;width:1px;height:7px;background:#7c7c7c"></div>
<div class="a" style="left:1183px;top:715px;width:1px;height:7px;background:#7c7c7c"></div>
<div class="a" style="left:1192px;top:715px;width:1px;height:7px;background:#7c7c7c"></div>
<div class="a" style="left:1200px;top:715px;width:1px;height:7px;background:#7c7c7c"></div>
<div class="a" style="left:1208px;top:715px;width:1px;height:7px;background:#7c7c7c"></div>
<div class="a" style="left:1217px;top:715px;width:1px;height:7px;background:#7c7c7c"></div>
<div class="a" style="left:1225px;top:708px;width:1px;height:14px;background:#8a8a8a"></div>
<div class="a" style="left:1233px;top:715px;width:1px;height:7px;background:#7c7c7c"></div>
<div class="a" style="left:1242px;top:715px;width:1px;height:7px;background:#7c7c7c"></div>
<div class="a" style="left:1250px;top:715px;width:1px;height:7px;background:#7c7c7c"></div>
<div class="a" style="left:1258px;top:715px;width:1px;height:7px;background:#7c7c7c"></div>
<div class="a" style="left:1267px;top:715px;width:1px;height:7px;background:#7c7c7c"></div>
<div class="a" style="left:1275px;top:715px;width:1px;height:7px;background:#7c7c7c"></div>
<div class="a" style="left:1283px;top:715px;width:1px;height:7px;background:#7c7c7c"></div>
<div class="a" style="left:1292px;top:715px;width:1px;height:7px;background:#7c7c7c"></div>
<div class="a" style="left:1300px;top:715px;width:1px;height:7px;background:#7c7c7c"></div>
<div class="a" style="left:1308px;top:715px;width:1px;height:7px;background:#7c7c7c"></div>
<div class="a" style="left:1317px;top:715px;width:1px;height:7px;background:#7c7c7c"></div>
<div class="a" style="left:1325px;top:715px;width:1px;height:7px;background:#7c7c7c"></div>
<div class="a" style="left:1333px;top:715px;width:1px;height:7px;background:#7c7c7c"></div>
<div class="a" style="left:1342px;top:715px;width:1px;height:7px;background:#7c7c7c"></div>
<div class="a" style="left:1350px;top:708px;width:1px;height:14px;background:#8a8a8a"></div>
<div class="a" style="left:1358px;top:715px;width:1px;height:7px;background:#7c7c7c"></div>
<div class="a" style="left:1367px;top:715px;width:1px;height:7px;background:#7c7c7c"></div>
<div class="a" style="left:1375px;top:715px;width:1px;height:7px;background:#7c7c7c"></div>
<div class="a" style="left:1383px;top:715px;width:1px;height:7px;background:#7c7c7c"></div>
<div class="a" style="left:1392px;top:715px;width:1px;height:7px;background:#7c7c7c"></div>
<div class="a" style="left:1400px;top:715px;width:1px;height:7px;background:#7c7c7c"></div>
<div class="a" style="left:1408px;top:715px;width:1px;height:7px;background:#7c7c7c"></div>
<div class="a" style="left:1417px;top:715px;width:1px;height:7px;background:#7c7c7c"></div>
<div class="a" style="left:1425px;top:715px;width:1px;height:7px;background:#7c7c7c"></div>
<div class="a" style="left:1433px;top:715px;width:1px;height:7px;background:#7c7c7c"></div>
<div class="a" style="left:1442px;top:715px;width:1px;height:7px;background:#7c7c7c"></div>
<div class="a" style="left:1450px;top:715px;width:1px;height:7px;background:#7c7c7c"></div>
<div class="a" style="left:1458px;top:715px;width:1px;height:7px;background:#7c7c7c"></div>
<div class="a" style="left:1467px;top:715px;width:1px;height:7px;background:#7c7c7c"></div>
<div class="a" style="left:1475px;top:708px;width:1px;height:14px;background:#8a8a8a"></div>
<div class="a" style="left:1483px;top:715px;width:1px;height:7px;background:#7c7c7c"></div>
<div class="a" style="left:1492px;top:715px;width:1px;height:7px;background:#7c7c7c"></div>
<div class="a" style="left:1500px;top:715px;width:1px;height:7px;background:#7c7c7c"></div>
<div class="a" style="left:1508px;top:715px;width:1px;height:7px;background:#7c7c7c"></div>
<div class="a" style="left:1517px;top:715px;width:1px;height:7px;background:#7c7c7c"></div>
<div class="a" style="left:1525px;top:715px;width:1px;height:7px;background:#7c7c7c"></div>
<div class="a" style="left:1533px;top:715px;width:1px;height:7px;background:#7c7c7c"></div>
<div class="a" style="left:1542px;top:715px;width:1px;height:7px;background:#7c7c7c"></div>
<div class="a" style="left:1550px;top:715px;width:1px;height:7px;background:#7c7c7c"></div>
<div class="a" style="left:1558px;top:715px;width:1px;height:7px;background:#7c7c7c"></div>
<div class="a" style="left:1567px;top:715px;width:1px;height:7px;background:#7c7c7c"></div>
<div class="a" style="left:1575px;top:715px;width:1px;height:7px;background:#7c7c7c"></div>
<div class="a" style="left:1583px;top:715px;width:1px;height:7px;background:#7c7c7c"></div>
<div class="a" style="left:1592px;top:715px;width:1px;height:7px;background:#7c7c7c"></div>
<div class="a" style="left:1600px;top:708px;width:1px;height:14px;background:#8a8a8a"></div>
<div class="a" style="left:1608px;top:715px;width:1px;height:7px;background:#7c7c7c"></div>
<div class="a" style="left:1617px;top:715px;width:1px;height:7px;background:#7c7c7c"></div>
<div class="a" style="left:1625px;top:715px;width:1px;height:7px;background:#7c7c7c"></div>
<div class="a" style="left:1633px;top:715px;width:1px;height:7px;background:#7c7c7c"></div>
<div class="a" style="left:1642px;top:715px;width:1px;height:7px;background:#7c7c7c"></div>
<div class="a" style="left:1650px;top:715px;width:1px;height:7px;background:#7c7c7c"></div>
<div class="a" style="left:1658px;top:715px;width:1px;height:7px;background:#7c7c7c"></div>
<div class="a" style="left:1667px;top:715px;width:1px;height:7px;background:#7c7c7c"></div>
<div class="a" style="left:1675px;top:715px;width:1px;height:7px;background:#7c7c7c"></div>
<div class="a" style="left:1683px;top:715px;width:1px;height:7px;background:#7c7c7c"></div>
<div class="a" style="left:1692px;top:715px;width:1px;height:7px;background:#7c7c7c"></div>
<div class="a" style="left:1700px;top:715px;width:1px;height:7px;background:#7c7c7c"></div>
<div class="a" style="left:1708px;top:715px;width:1px;height:7px;background:#7c7c7c"></div>
<div class="a" style="left:1717px;top:715px;width:1px;height:7px;background:#7c7c7c"></div>
<div class="a" style="left:1725px;top:708px;width:1px;height:14px;background:#8a8a8a"></div>
<div class="a" style="left:1733px;top:715px;width:1px;height:7px;background:#7c7c7c"></div>
<div class="a" style="left:1742px;top:715px;width:1px;height:7px;background:#7c7c7c"></div>
<div class="a" style="left:1750px;top:715px;width:1px;height:7px;background:#7c7c7c"></div>
<div class="a" style="left:1758px;top:715px;width:1px;height:7px;background:#7c7c7c"></div>
<div class="a" style="left:1767px;top:715px;width:1px;height:7px;background:#7c7c7c"></div>
<div class="a" style="left:1775px;top:715px;width:1px;height:7px;background:#7c7c7c"></div>
<div class="a" style="left:1783px;top:715px;width:1px;height:7px;background:#7c7c7c"></div>
<div class="a" style="left:1792px;top:715px;width:1px;height:7px;background:#7c7c7c"></div>
<div class="a" style="left:1800px;top:715px;width:1px;height:7px;background:#7c7c7c"></div>
<div class="a" style="left:1187px;top:723px;width:95px;height:3px;background:#f2e600"></div>
<svg class="a" style="left:1120px;top:707px" width="15" height="18"><path d="M0 0H14V10L7 17L0 10Z" fill="#2d8ceb"/></svg>
<div class="a" style="left:1127px;top:723px;width:1px;height:248px;background:#2d8ceb"></div>
<div class="t" style="left:760px;top:761px;width:40px;text-align:center;font-size:14px;color:#b0b0b0">V3</div>
<svg class="a" style="left:741px;top:760px" width="12" height="16"><path d="M3 7V4Q3 1.5 6 1.5Q9 1.5 9 4" fill="none" stroke="#c4c4c4" stroke-width="1.8"/><rect x="1" y="7" width="10" height="8" fill="#c4c4c4"/><rect x="5" y="9.5" width="2" height="3" fill="#232323"/></svg>
<svg class="a" style="left:809px;top:761px" width="17" height="15"><rect x="1" y="1" width="9" height="13" fill="none" stroke="#c4c4c4" stroke-width="1.8"/><path d="M1 7.5H10" stroke="#c4c4c4" stroke-width="1.5"/><rect x="10" y="3" width="6" height="9" fill="#c4c4c4"/></svg>
<svg class="a" style="left:842px;top:763px" width="18" height="12"><path d="M1 6Q9 -2 17 6Q9 14 1 6Z" fill="none" stroke="#c4c4c4" stroke-width="1.8"/><circle cx="9" cy="6" r="2.6" fill="#c4c4c4"/></svg>
<div class="t" style="left:760px;top:792px;width:40px;text-align:center;font-size:14px;color:#b0b0b0">V2</div>
<svg class="a" style="left:741px;top:791px" width="12" height="16"><path d="M3 7V4Q3 1.5 6 1.5Q9 1.5 9 4" fill="none" stroke="#c4c4c4" stroke-width="1.8"/><rect x="1" y="7" width="10" height="8" fill="#c4c4c4"/><rect x="5" y="9.5" width="2" height="3" fill="#232323"/></svg>
<svg class="a" style="left:809px;top:792px" width="17" height="15"><rect x="1" y="1" width="9" height="13" fill="none" stroke="#c4c4c4" stroke-width="1.8"/><path d="M1 7.5H10" stroke="#c4c4c4" stroke-width="1.5"/><rect x="10" y="3" width="6" height="9" fill="#c4c4c4"/></svg>
<svg class="a" style="left:842px;top:794px" width="18" height="12"><path d="M1 6Q9 -2 17 6Q9 14 1 6Z" fill="none" stroke="#c4c4c4" stroke-width="1.8"/><circle cx="9" cy="6" r="2.6" fill="#c4c4c4"/></svg>
<div class="a" style="left:695px;top:816px;width:40px;height:30px;background:#1762a3"></div>
<div class="t" style="left:695px;top:823px;width:40px;text-align:center;font-size:14px;color:#d8e6f4">V1</div>
<div class="a" style="left:760px;top:816px;width:40px;height:30px;background:#1762a3"></div>
<div class="t" style="left:760px;top:823px;width:40px;text-align:center;font-size:14px;color:#d8e6f4">V1</div>
<svg class="a" style="left:741px;top:822px" width="12" height="16"><path d="M3 7V4Q3 1.5 6 1.5Q9 1.5 9 4" fill="none" stroke="#c4c4c4" stroke-width="1.8"/><rect x="1" y="7" width="10" height="8" fill="#c4c4c4"/><rect x="5" y="9.5" width="2" height="3" fill="#232323"/></svg>
<svg class="a" style="left:809px;top:823px" width="17" height="15"><rect x="1" y="1" width="9" height="13" fill="none" stroke="#c4c4c4" stroke-width="1.8"/><path d="M1 7.5H10" stroke="#c4c4c4" stroke-width="1.5"/><rect x="10" y="3" width="6" height="9" fill="#c4c4c4"/></svg>
<svg class="a" style="left:842px;top:825px" width="18" height="12"><path d="M1 6Q9 -2 17 6Q9 14 1 6Z" fill="none" stroke="#c4c4c4" stroke-width="1.8"/><circle cx="9" cy="6" r="2.6" fill="#c4c4c4"/></svg>
<div class="a" style="left:695px;top:853px;width:40px;height:30px;background:#1762a3"></div>
<div class="t" style="left:695px;top:860px;width:40px;text-align:center;font-size:14px;color:#d8e6f4">A1</div>
<div class="a" style="left:760px;top:853px;width:40px;height:30px;background:#1762a3"></div>
<div class="t" style="left:760px;top:860px;width:40px;text-align:center;font-size:14px;color:#d8e6f4">A1</div>
<svg class="a" style="left:741px;top:859px" width="12" height="16"><path d="M3 7V4Q3 1.5 6 1.5Q9 1.5 9 4" fill="none" stroke="#c4c4c4" stroke-width="1.8"/><rect x="1" y="7" width="10" height="8" fill="#c4c4c4"/><rect x="5" y="9.5" width="2" height="3" fill="#232323"/></svg>
<svg class="a" style="left:809px;top:860px" width="17" height="15"><rect x="1" y="1" width="9" height="13" fill="none" stroke="#c4c4c4" stroke-width="1.8"/><path d="M1 7.5H10" stroke="#c4c4c4" stroke-width="1.5"/><rect x="10" y="3" width="6" height="9" fill="#c4c4c4"/></svg>
<div class="t" style="left:845px;top:861px;font-size:13px;color:#b0b0b0">M</div>
<div class="t" style="left:880px;top:861px;font-size:13px;color:#b0b0b0">S</div>
<svg class="a" style="left:911px;top:858px" width="14" height="20"><rect x="4" y="1" width="6" height="11" rx="3" fill="#c4c4c4"/><path d="M2 8Q2 15 7 15Q12 15 12 8M7 15V18M4 18H10" fill="none" stroke="#c4c4c4" stroke-width="1.5"/></svg>
<div class="a" style="left:695px;top:884px;width:40px;height:30px;background:#1762a3"></div>
<div class="t" style="left:695px;top:891px;width:40px;text-align:center;font-size:14px;color:#d8e6f4">A2</div>
<div class="a" style="left:760px;top:884px;width:40px;height:30px;background:#1762a3"></div>
<div class="t" style="left:760px;top:891px;width:40px;text-align:center;font-size:14px;color:#d8e6f4">A2</div>
<svg class="a" style="left:741px;top:890px" width="12" height="16"><path d="M3 7V4Q3 1.5 6 1.5Q9 1.5 9 4" fill="none" stroke="#c4c4c4" stroke-width="1.8"/><rect x="1" y="7" width="10" height="8" fill="#c4c4c4"/><rect x="5" y="9.5" width="2" height="3" fill="#232323"/></svg>
<svg class="a" style="left:809px;top:891px" width="17" height="15"><rect x="1" y="1" width="9" height="13" fill="none" stroke="#c4c4c4" stroke-width="1.8"/><path d="M1 7.5H10" stroke="#c4c4c4" stroke-width="1.5"/><rect x="10" y="3" width="6" height="9" fill="#c4c4c4"/></svg>
<div class="t" style="left:845px;top:892px;font-size:13px;color:#b0b0b0">M</div>
<div class="t" style="left:880px;top:892px;font-size:13px;color:#b0b0b0">S</div>
<svg class="a" style="left:911px;top:889px" width="14" height="20"><rect x="4" y="1" width="6" height="11" rx="3" fill="#c4c4c4"/><path d="M2 8Q2 15 7 15Q12 15 12 8M7 15V18M4 18H10" fill="none" stroke="#c4c4c4" stroke-width="1.5"/></svg>
<div class="a" style="left:695px;top:915px;width:40px;height:30px;background:#1762a3"></div>
<div class="t" style="left:695px;top:922px;width:40px;text-align:center;font-size:14px;color:#d8e6f4">A3</div>
<div class="a" style="left:760px;top:915px;width:40px;height:30px;background:#1762a3"></div>
<div class="t" style="left:760px;top:922px;width:40px;text-align:center;font-size:14px;color:#d8e6f4">A3</div>
<svg class="a" style="left:741px;top:921px" width="12" height="16"><path d="M3 7V4Q3 1.5 6 1.5Q9 1.5 9 4" fill="none" stroke="#c4c4c4" stroke-width="1.8"/><rect x="1" y="7" width="10" height="8" fill="#c4c4c4"/><rect x="5" y="9.5" width="2" height="3" fill="#232323"/></svg>
<svg class="a" style="left:809px;top:922px" width="17" height="15"><rect x="1" y="1" width="9" height="13" fill="none" stroke="#c4c4c4" stroke-width="1.8"/><path d="M1 7.5H10" stroke="#c4c4c4" stroke-width="1.5"/><rect x="10" y="3" width="6" height="9" fill="#c4c4c4"/></svg>
<div class="t" style="left:845px;top:923px;font-size:13px;color:#b0b0b0">M</div>
<div class="t" style="left:880px;top:923px;font-size:13px;color:#b0b0b0">S</div>
<svg class="a" style="left:911px;top:920px" width="14" height="20"><rect x="4" y="1" width="6" height="11" rx="3" fill="#c4c4c4"/><path d="M2 8Q2 15 7 15Q12 15 12 8M7 15V18M4 18H10" fill="none" stroke="#c4c4c4" stroke-width="1.5"/></svg>
<div class="a" style="left:695px;top:947px;width:40px;height:25px;background:#1762a3"></div>
<div class="t" style="left:695px;top:953px;width:40px;text-align:center;font-size:14px;color:#d8e6f4">A4</div>
<div class="t" style="left:760px;top:953px;width:40px;text-align:center;font-size:14px;color:#b0b0b0">A4</div>
<svg class="a" style="left:741px;top:952px" width="12" height="16"><path d="M3 7V4Q3 1.5 6 1.5Q9 1.5 9 4" fill="none" stroke="#c4c4c4" stroke-width="1.8"/><rect x="1" y="7" width="10" height="8" fill="#c4c4c4"/><rect x="5" y="9.5" width="2" height="3" fill="#232323"/></svg>
<svg class="a" style="left:809px;top:953px" width="17" height="15"><rect x="1" y="1" width="9" height="13" fill="none" stroke="#c4c4c4" stroke-width="1.8"/><path d="M1 7.5H10" stroke="#c4c4c4" stroke-width="1.5"/><rect x="10" y="3" width="6" height="9" fill="#c4c4c4"/></svg>
<div class="t" style="left:845px;top:954px;font-size:13px;color:#b0b0b0">M</div>
<div class="t" style="left:880px;top:954px;font-size:13px;color:#b0b0b0">S</div>
<svg class="a" style="left:911px;top:951px" width="14" height="20"><rect x="4" y="1" width="6" height="11" rx="3" fill="#c4c4c4"/><path d="M2 8Q2 15 7 15Q12 15 12 8M7 15V18M4 18H10" fill="none" stroke="#c4c4c4" stroke-width="1.5"/></svg>
<div class="a" style="left:1187px;top:816px;width:93px;height:30px;background:#fff"></div>
<div class="a" style="left:1187px;top:816px;width:93px;height:17px;background:#c6c6c6"></div>
<div class="a" style="left:1199px;top:818px;width:13px;height:12px;background:#6a6a6a;border:1px solid #888"></div><div class="t" style="left:1200px;top:818px;font-size:11px;font-style:italic;color:#1a1a1a;font-family:'Liberation Serif'">fx</div>
<div class="t" style="left:1222px;top:818px;font-size:14px;color:#111;width:58px;overflow:hidden">A010C194</div>
<div class="a" style="left:1187px;top:853px;width:93px;height:30px;background:#fff"></div>
<svg class="a" style="left:1192px;top:858px" width="83" height="20"><rect width="83" height="20" fill="#4f76a8"/><path d="M0 20V17L3 15L6 17L9 14L11 17L14 16L17 18L20 13L22 16L25 18L30 17L35 18V0.5L36 0.5V18L40 17L45 18L50 16L55 18L60 17L63 15L66 18L70 17L74 14L77 18L80 15L83 18V20Z" fill="#fff"/></svg>
<div class="a" style="left:1199px;top:855px;width:13px;height:12px;background:#6a6a6a;border:1px solid #888"></div><div class="t" style="left:1200px;top:855px;font-size:11px;font-style:italic;color:#1a1a1a;font-family:'Liberation Serif'">fx</div>
<div class="a" style="left:1187px;top:884px;width:93px;height:30px;background:#fff"></div>
<svg class="a" style="left:1192px;top:889px" width="83" height="20"><rect width="83" height="20" fill="#4f76a8"/><path d="M0 20V17L3 15L6 17L9 14L11 17L14 16L17 18L20 13L22 16L25 18L30 17L35 18V0.5L36 0.5V18L40 17L45 18L50 16L55 18L60 17L63 15L66 18L70 17L74 14L77 18L80 15L83 18V20Z" fill="#fff"/></svg>
<div class="a" style="left:1199px;top:886px;width:13px;height:12px;background:#6a6a6a;border:1px solid #888"></div><div class="t" style="left:1200px;top:886px;font-size:11px;font-style:italic;color:#1a1a1a;font-family:'Liberation Serif'">fx</div>
<div class="a" style="left:1187px;top:915px;width:93px;height:30px;background:#fff"></div>
<div class="a" style="left:1192px;top:920px;width:83px;height:20px;background:#4f76a8"></div>
<div class="a" style="left:1199px;top:917px;width:13px;height:12px;background:#6a6a6a;border:1px solid #888"></div><div class="t" style="left:1200px;top:917px;font-size:11px;font-style:italic;color:#1a1a1a;font-family:'Liberation Serif'">fx</div>
<div class="a" style="left:1187px;top:946px;width:93px;height:25px;background:#c8c8c8"></div>
<div class="a" style="left:1192px;top:951px;width:83px;height:20px;background:#3c5a80"></div>
<div class="a" style="left:1199px;top:948px;width:13px;height:12px;background:#6a6a6a;border:1px solid #888"></div><div class="t" style="left:1200px;top:948px;font-size:11px;font-style:italic;color:#1a1a1a;font-family:'Liberation Serif'">fx</div>
<svg class="a" style="left:1187px;top:816px" width="93" height="8"><path d="M0 0H7L0 7ZM93 0H86L93 7Z" fill="#3a3a3a"/></svg>
<svg class="a" style="left:1187px;top:853px" width="93" height="8"><path d="M0 0H7L0 7ZM93 0H86L93 7Z" fill="#3a3a3a"/></svg>
<svg class="a" style="left:1187px;top:884px" width="93" height="8"><path d="M0 0H7L0 7ZM93 0H86L93 7Z" fill="#3a3a3a"/></svg>
<svg class="a" style="left:1187px;top:915px" width="93" height="8"><path d="M0 0H7L0 7ZM93 0H86L93 7Z" fill="#3a3a3a"/></svg>
<svg class="a" style="left:1187px;top:946px" width="93" height="8"><path d="M0 0H7L0 7ZM93 0H86L93 7Z" fill="#3a3a3a"/></svg>
<div class="a" style="left:1806px;top:728px;width:12px;height:118px;background:#2a2a2a;border-radius:6px"></div>
<div class="a" style="left:1806px;top:852px;width:12px;height:118px;background:#2a2a2a;border-radius:6px"></div>
<div class="a" style="left:1805px;top:730px;width:13px;height:13px;border:2px solid #a8a8a8;border-radius:50%;background:#232323"></div>
<div class="a" style="left:1805px;top:831px;width:13px;height:13px;border:2px solid #a8a8a8;border-radius:50%;background:#232323"></div>
<div class="a" style="left:1805px;top:853px;width:13px;height:13px;border:2px solid #a8a8a8;border-radius:50%;background:#232323"></div>
<div class="a" style="left:1805px;top:955px;width:13px;height:13px;border:2px solid #a8a8a8;border-radius:50%;background:#232323"></div>
<div class="a" style="left:700px;top:974px;width:398px;height:13px;background:#2e2e2e;border-radius:6px"></div>
<div class="a" style="left:696px;top:974px;width:13px;height:13px;border:2px solid #a8a8a8;border-radius:50%;background:#232323"></div>
<div class="a" style="left:1088px;top:974px;width:13px;height:13px;border:2px solid #a8a8a8;border-radius:50%;background:#232323"></div>
<div class="a" style="left:1859px;top:671px;width:11px;height:285px;background:#1a1a1a;border:1px solid #0c0c0c"></div>
<div class="a" style="left:1860px;top:682px;width:9px;height:1px;background:#0c0c0c"></div>
<div class="a" style="left:1864px;top:672px;width:1px;height:10px;background:#0c0c0c"></div>
<div class="a" style="left:1861px;top:951px;width:7px;height:2px;background:repeating-linear-gradient(90deg,#c8c800 0 3px,transparent 3px 4px)"></div>
<div class="a" style="left:1871px;top:676px;width:4px;height:278px;background:repeating-linear-gradient(#6a6a6a 0 1px,transparent 1px 4.4px)"></div>
<div class="t" style="left:1878px;top:678px;font-size:11px;color:#8a8a8a">0</div>
<div class="t" style="left:1878px;top:706px;font-size:11px;color:#8a8a8a">-6</div>
<div class="t" style="left:1878px;top:732px;font-size:11px;color:#8a8a8a">-12</div>
<div class="t" style="left:1878px;top:760px;font-size:11px;color:#8a8a8a">-18</div>
<div class="t" style="left:1878px;top:786px;font-size:11px;color:#8a8a8a">-24</div>
<div class="t" style="left:1878px;top:813px;font-size:11px;color:#8a8a8a">-30</div>
<div class="t" style="left:1878px;top:840px;font-size:11px;color:#8a8a8a">-36</div>
<div class="t" style="left:1878px;top:867px;font-size:11px;color:#8a8a8a">-42</div>
<div class="t" style="left:1878px;top:893px;font-size:11px;color:#8a8a8a">-48</div>
<div class="t" style="left:1878px;top:921px;font-size:11px;color:#8a8a8a">-54</div>
<div class="t" style="left:1878px;top:945px;font-size:11px;color:#8a8a8a">dB</div>
<!-- video -->
<div class="a" style="left:929px;top:141px;width:651px;height:366px;background:#000"></div>
<div class="a" style="left:962px;top:158px;width:586px;height:332px;border:1px solid #fff"></div>
<div class="a" style="left:994px;top:177px;width:522px;height:293px;border:1px solid #fff"></div>
<!-- program monitor -->
<div class="t" style="left:606px;top:98px;font-size:15px;color:#c8c8c8;letter-spacing:0.7px">节目: 序列</div>
<svg class="a" style="left:694px;top:101px" width="11" height="10"><path d="M0 1H10M0 5H10M0 9H10" stroke="#c0c0c0" stroke-width="1.6"/></svg>
<div class="a" style="left:1254px;top:171px;width:1px;height:12px;background:#fff"></div>
<div class="a" style="left:1254px;top:464px;width:1px;height:12px;background:#fff"></div>
<div class="a" style="left:988px;top:323px;width:12px;height:1px;background:#fff"></div>
<div class="a" style="left:1509px;top:323px;width:12px;height:1px;background:#fff"></div>
<div class="t" style="left:617px;top:514px;font-size:19px;font-weight:bold;color:#3d8ee6">00:00:36:15</div>
<div class="a" style="left:744px;top:513px;width:106px;height:20px;background:#1b1b1b;border:1px solid #2a2a2a"></div>
<div class="t" style="left:752px;top:516px;font-size:14px;color:#d0d0d0">适合</div>
<svg class="a" style="left:833px;top:519px" width="11" height="7"><path d="M1 1L5.5 5.5L10 1" fill="none" stroke="#b0b0b0" stroke-width="1.2"/></svg>
<div class="a" style="left:1631px;top:513px;width:108px;height:20px;background:#1b1b1b;border:1px solid #2a2a2a"></div>
<div class="t" style="left:1639px;top:516px;font-size:14px;color:#d0d0d0">1/2</div>
<svg class="a" style="left:1721px;top:519px" width="11" height="7"><path d="M1 1L5.5 5.5L10 1" fill="none" stroke="#b0b0b0" stroke-width="1.2"/></svg>
<svg class="a" style="left:1754px;top:513px" width="20" height="20"><path d="M4 4L16 16" stroke="#c4c4c4" stroke-width="3.2" stroke-linecap="round"/><circle cx="4.5" cy="4.5" r="4" fill="#c4c4c4"/><path d="M2 1L6 5" stroke="#232323" stroke-width="2"/></svg>
<div class="t" style="left:1789px;top:514px;font-size:19px;font-weight:bold;color:#bdbdbd">00:00:22:18</div>
<div class="a" style="left:1498px;top:540px;width:401px;height:25px;background:#444"></div>
<div class="a" style="left:606px;top:552px;width:1px;height:13px;background:#7a7a7a"></div>
<div class="a" style="left:623px;top:560px;width:1px;height:5px;background:#626262"></div>
<div class="a" style="left:641px;top:560px;width:1px;height:5px;background:#626262"></div>
<div class="a" style="left:658px;top:560px;width:1px;height:5px;background:#626262"></div>
<div class="a" style="left:676px;top:560px;width:1px;height:5px;background:#626262"></div>
<div class="a" style="left:693px;top:560px;width:1px;height:5px;background:#626262"></div>
<div class="a" style="left:711px;top:560px;width:1px;height:5px;background:#626262"></div>
<div class="a" style="left:728px;top:560px;width:1px;height:5px;background:#626262"></div>
<div class="a" style="left:746px;top:560px;width:1px;height:5px;background:#626262"></div>
<div class="a" style="left:763px;top:560px;width:1px;height:5px;background:#626262"></div>
<div class="a" style="left:781px;top:560px;width:1px;height:5px;background:#626262"></div>
<div class="a" style="left:798px;top:560px;width:1px;height:5px;background:#626262"></div>
<div class="a" style="left:816px;top:560px;width:1px;height:5px;background:#626262"></div>
<div class="a" style="left:833px;top:560px;width:1px;height:5px;background:#626262"></div>
<div class="a" style="left:851px;top:560px;width:1px;height:5px;background:#626262"></div>
<div class="a" style="left:868px;top:552px;width:1px;height:13px;background:#7a7a7a"></div>
<div class="a" style="left:886px;top:560px;width:1px;height:5px;background:#626262"></div>
<div class="a" style="left:903px;top:560px;width:1px;height:5px;background:#626262"></div>
<div class="a" style="left:921px;top:560px;width:1px;height:5px;background:#626262"></div>
<div class="a" style="left:938px;top:560px;width:1px;height:5px;background:#626262"></div>
<div class="a" style="left:956px;top:560px;width:1px;height:5px;background:#626262"></div>
<div class="a" style="left:973px;top:560px;width:1px;height:5px;background:#626262"></div>
<div class="a" style="left:991px;top:560px;width:1px;height:5px;background:#626262"></div>
<div class="a" style="left:1008px;top:560px;width:1px;height:5px;background:#626262"></div>
<div class="a" style="left:1026px;top:560px;width:1px;height:5px;background:#626262"></div>
<div class="a" style="left:1043px;top:560px;width:1px;height:5px;background:#626262"></div>
<div class="a" style="left:1061px;top:560px;width:1px;height:5px;background:#626262"></div>
<div class="a" style="left:1078px;top:560px;width:1px;height:5px;background:#626262"></div>
<div class="a" style="left:1096px;top:560px;width:1px;height:5px;background:#626262"></div>
<div class="a" style="left:1113px;top:560px;width:1px;height:5px;background:#626262"></div>
<div class="a" style="left:1131px;top:552px;width:1px;height:13px;background:#7a7a7a"></div>
<div class="a" style="left:1148px;top:560px;width:1px;height:5px;background:#626262"></div>
<div class="a" style="left:1166px;top:560px;width:1px;height:5px;background:#626262"></div>
<div class="a" style="left:1183px;top:560px;width:1px;height:5px;background:#626262"></div>
<div class="a" style="left:1201px;top:560px;width:1px;height:5px;background:#626262"></div>
<div class="a" style="left:1218px;top:560px;width:1px;height:5px;background:#626262"></div>
<div class="a" style="left:1236px;top:560px;width:1px;height:5px;background:#626262"></div>
<div class="a" style="left:1253px;top:560px;width:1px;height:5px;background:#626262"></div>
<div class="a" style="left:1271px;top:560px;width:1px;height:5px;background:#626262"></div>
<div class="a" style="left:1288px;top:560px;width:1px;height:5px;background:#626262"></div>
<div class="a" style="left:1306px;top:560px;width:1px;height:5px;background:#626262"></div>
<div class="a" style="left:1323px;top:560px;width:1px;height:5px;background:#626262"></div>
<div class="a" style="left:1341px;top:560px;width:1px;height:5px;background:#626262"></div>
<div class="a" style="left:1358px;top:560px;width:1px;height:5px;background:#626262"></div>
<div class="a" style="left:1376px;top:560px;width:1px;height:5px;background:#626262"></div>
<div class="a" style="left:1393px;top:552px;width:1px;height:13px;background:#7a7a7a"></div>
<div class="a" style="left:1411px;top:560px;width:1px;height:5px;background:#626262"></div>
<div class="a" style="left:1428px;top:560px;width:1px;height:5px;background:#626262"></div>
<div class="a" style="left:1446px;top:560px;width:1px;height:5px;background:#626262"></div>
<div class="a" style="left:1463px;top:560px;width:1px;height:5px;background:#626262"></div>
<div class="a" style="left:1481px;top:560px;width:1px;height:5px;background:#626262"></div>
<div class="a" style="left:1498px;top:560px;width:1px;height:5px;background:#626262"></div>
<div class="a" style="left:1516px;top:560px;width:1px;height:5px;background:#626262"></div>
<div class="a" style="left:1533px;top:560px;width:1px;height:5px;background:#626262"></div>
<div class="a" style="left:1551px;top:560px;width:1px;height:5px;background:#626262"></div>
<div class="a" style="left:1568px;top:560px;width:1px;height:5px;background:#626262"></div>
<div class="a" style="left:1586px;top:560px;width:1px;height:5px;background:#626262"></div>
<div class="a" style="left:1603px;top:560px;width:1px;height:5px;background:#626262"></div>
<div class="a" style="left:1621px;top:560px;width:1px;height:5px;background:#626262"></div>
<div class="a" style="left:1638px;top:560px;width:1px;height:5px;background:#626262"></div>
<div class="a" style="left:1656px;top:552px;width:1px;height:13px;background:#7a7a7a"></div>
<div class="a" style="left:1673px;top:560px;width:1px;height:5px;background:#626262"></div>
<div class="a" style="left:1691px;top:560px;width:1px;height:5px;background:#626262"></div>
<div class="a" style="left:1708px;top:560px;width:1px;height:5px;background:#626262"></div>
<div class="a" style="left:1726px;top:560px;width:1px;height:5px;background:#626262"></div>
<div class="a" style="left:1743px;top:560px;width:1px;height:5px;background:#626262"></div>
<div class="a" style="left:1761px;top:560px;width:1px;height:5px;background:#626262"></div>
<div class="a" style="left:1778px;top:560px;width:1px;height:5px;background:#626262"></div>
<div class="a" style="left:1796px;top:560px;width:1px;height:5px;background:#626262"></div>
<div class="a" style="left:1813px;top:560px;width:1px;height:5px;background:#626262"></div>
<div class="a" style="left:1831px;top:560px;width:1px;height:5px;background:#626262"></div>
<div class="a" style="left:1848px;top:560px;width:1px;height:5px;background:#626262"></div>
<div class="a" style="left:1866px;top:560px;width:1px;height:5px;background:#626262"></div>
<div class="a" style="left:1883px;top:560px;width:1px;height:5px;background:#626262"></div>
<div class="a" style="left:1497px;top:540px;width:1px;height:25px;background:#2d8ceb"></div>
<svg class="a" style="left:1240px;top:547px" width="14" height="17"><path d="M1 0H13V10L7 16L1 10Z" fill="#2d8ceb"/></svg>
<div class="a" style="left:607px;top:566px;width:1295px;height:14px;background:#2e2e2e;border-radius:7px"></div>
<div class="a" style="left:608px;top:567px;width:13px;height:13px;border:2px solid #a8a8a8;border-radius:50%;background:#232323"></div>
<div class="a" style="left:1889px;top:567px;width:13px;height:13px;border:2px solid #a8a8a8;border-radius:50%;background:#232323"></div>
<svg class="a" style="left:1018px;top:596px" width="26" height="16"><path d="M2 2H12V9L7 13L2 9Z" fill="#c4c4c4"/></svg>
<svg class="a" style="left:1064px;top:596px" width="26" height="16"><path d="M9 1Q6 1 6 4V6Q6 7 4 7.5Q6 8 6 9V11Q6 14 9 14" fill="none" stroke="#c4c4c4" stroke-width="1.6"/></svg>
<svg class="a" style="left:1104px;top:596px" width="26" height="16"><path d="M5 1Q8 1 8 4V6Q8 7 10 7.5Q8 8 8 9V11Q8 14 5 14" fill="none" stroke="#c4c4c4" stroke-width="1.6"/></svg>
<svg class="a" style="left:1158px;top:596px" width="26" height="16"><path d="M4 1Q2 1 2 4V6Q2 7 1 7.5Q2 8 2 9V11Q2 14 4 14" fill="none" stroke="#c4c4c4" stroke-width="1.5"/><path d="M6 7.5L11 3.5V11.5Z" fill="#c4c4c4"/><path d="M10 7.5H19" stroke="#c4c4c4" stroke-width="2.2"/></svg>
<svg class="a" style="left:1203px;top:596px" width="26" height="16"><path d="M2 7.5L11 2V13Z" fill="#c4c4c4"/><path d="M14 2V13" stroke="#c4c4c4" stroke-width="2.2"/></svg>
<svg class="a" style="left:1246px;top:596px" width="26" height="16"><path d="M2 0.5L14 7.5L2 14.5Z" fill="#c4c4c4"/></svg>
<svg class="a" style="left:1291px;top:596px" width="26" height="16"><path d="M1 2V13" stroke="#c4c4c4" stroke-width="2.2"/><path d="M4 2L13 7.5L4 13Z" fill="#c4c4c4"/></svg>
<svg class="a" style="left:1332px;top:596px" width="26" height="16"><path d="M1 7.5H10" stroke="#c4c4c4" stroke-width="2.2"/><path d="M14 7.5L9 3.5V11.5Z" fill="#c4c4c4"/><path d="M16 1Q18 1 18 4V6Q18 7 19 7.5Q18 8 18 9V11Q18 14 16 14" fill="none" stroke="#c4c4c4" stroke-width="1.5"/></svg>
<svg class="a" style="left:1384px;top:596px" width="26" height="16"><path d="M0 8H7V14H0ZM17 8H24V14H17Z" fill="#c4c4c4"/><path d="M6 4H18V12H6Z" fill="#c4c4c4"/><path d="M12 5V10M10 7L12 5L14 7" fill="none" stroke="#232323" stroke-width="1.3"/></svg>
<svg class="a" style="left:1427px;top:596px" width="26" height="16"><path d="M0 8H6V14H0ZM18 8H24V14H18Z" fill="#c4c4c4"/><path d="M7 4H17V12H7Z" fill="none" stroke="#c4c4c4" stroke-width="1.8"/><path d="M12 5V10M10 7L12 5L14 7" fill="none" stroke="#c4c4c4" stroke-width="1.3"/></svg>
<svg class="a" style="left:1475px;top:596px" width="26" height="16"><path d="M1 4H5L7 2H11L13 4H17V14H1Z" fill="#c4c4c4"/><circle cx="9" cy="9" r="3" fill="#232323"/><circle cx="9" cy="9" r="1.6" fill="#c4c4c4"/></svg>
<svg class="a" style="left:1873px;top:598px" width="14" height="14"><path d="M7 1V13M1 7H13" stroke="#d0d0d0" stroke-width="3"/></svg>
<!-- taskbar -->
<div class="a" style="left:0;top:1030px;width:1920px;height:50px;background:linear-gradient(90deg,#1c1c1c 0px,#1f1f1f 300px,#242424 520px,#2a2a2a 620px,#222 760px,#262626 900px,#2c2c2c 990px,#1c1c1c 1100px,#202020 1300px,#232323 1500px,#262626 1700px,#222 1920px)"></div>
<div class="a" style="left:0;top:1030px;width:1920px;height:50px;opacity:0.5;background:repeating-linear-gradient(73deg,rgba(255,255,255,0.025) 0 3px,rgba(0,0,0,0.03) 3px 11px,rgba(255,255,255,0.015) 11px 17px,rgba(0,0,0,0.02) 17px 29px),repeating-linear-gradient(-61deg,rgba(255,255,255,0.02) 0 5px,rgba(0,0,0,0.04) 5px 13px,rgba(255,255,255,0.01) 13px 23px)"></div>
<div class="a" style="left:310px;top:1030px;width:61px;height:50px;background:#343434"></div>
<div class="a" style="left:434px;top:1030px;width:61px;height:50px;background:#343434"></div>
<div class="a" style="left:310px;top:1077px;width:61px;height:3px;background:#a8a8a8"></div>
<div class="a" style="left:377px;top:1077px;width:51px;height:3px;background:#a8a8a8"></div>
<div class="a" style="left:434px;top:1077px;width:61px;height:3px;background:#a8a8a8"></div>
<div class="a" style="left:377px;top:1030px;width:51px;height:47px;background:#1c1c1c"></div>
<svg class="a" style="left:20px;top:1045px" width="21" height="21"><path d="M0 2.8L8.5 1.6V9.6H0ZM9.6 1.4L20.5 0V9.6H9.6ZM0 10.7H8.5V18.7L0 17.5ZM9.6 10.7H20.5V20.3L9.6 18.9Z" fill="#fff"/></svg>
<svg class="a" style="left:78px;top:1045px" width="25" height="20"><rect x="5" y="1" width="15" height="18" fill="none" stroke="#fff" stroke-width="1.3"/><path d="M4 4H1V15H4M21 4H24V15H21" fill="none" stroke="#fff" stroke-width="1.3"/></svg>
<svg class="a" style="left:140px;top:1041px" width="28" height="28" viewBox="0 0 28 28"><circle cx="14" cy="14" r="14" fill="#db4437"/><path d="M14 14L1.9 7A14 14 0 0 0 14 28Z" fill="#0f9d58"/><path d="M14 14L14 28A14 14 0 0 0 26.1 7Z" fill="#f4c20d"/><path d="M14 14L26.1 7H14Z" fill="#f4c20d"/><path d="M14 14L1.9 7L7 17Z" fill="#0f9d58"/><circle cx="14" cy="14" r="6.3" fill="#fff"/><circle cx="14" cy="14" r="5" fill="#4285f4"/></svg>
<svg class="a" style="left:203px;top:1041px" width="26" height="28" viewBox="0 0 26 28"><path d="M13 1C5 1 1 7 1 13C2 8 7 5 12 5C18 5 23 9 23 15H7C7 21 12 24 17 24C20 24 23 23 25 21V26C22 27.5 19 28 16 28C8 28 1 23 1 15C1 6 7 1 13 1ZM7 12H17C17 9 15 7.5 12 7.5C9 7.5 7.5 9.5 7 12Z" fill="#1c86e0"/></svg>
<svg class="a" style="left:262px;top:1042px" width="33" height="27" viewBox="0 0 33 27"><ellipse cx="11.5" cy="9.5" rx="11" ry="9" fill="#5ec341"/><path d="M4 16L3 21L9 17Z" fill="#5ec341"/><circle cx="7.5" cy="8" r="1.4" fill="#2a6e1e"/><circle cx="15" cy="8" r="1.4" fill="#2a6e1e"/><ellipse cx="22.5" cy="17.5" rx="9.5" ry="8" fill="#f0f0f0" stroke="#222" stroke-width="0.8"/><path d="M28 23L30 27L24 24.5Z" fill="#f0f0f0"/><circle cx="19.5" cy="16" r="1.1" fill="#777"/><circle cx="25.5" cy="16" r="1.1" fill="#777"/></svg>
<svg class="a" style="left:326px;top:1043px" width="28" height="24" viewBox="0 0 28 24"><path d="M0 2H10L12 4H27V23H0Z" fill="#f6d36e"/><rect x="1" y="3" width="8" height="3" fill="#fff6d0"/><path d="M0 7H27V23H0Z" fill="#fbe49a"/><path d="M5 23V13H22V23H18V17H9V23Z" fill="#2b9fd9"/><rect x="9" y="17" width="9" height="6" fill="#f6d36e"/></svg>
<svg class="a" style="left:387px;top:1040px" width="29" height="28" viewBox="0 0 29 28"><path d="M13 4H28V25H13Z" fill="#fff" stroke="#2b579a" stroke-width="1.5"/><path d="M16 8H26M16 11H26M16 14H26M16 17H26M16 20H26" stroke="#2b579a" stroke-width="1.3"/><path d="M0 3.5L17 0V28L0 24.5Z" fill="#2b579a"/><text x="2" y="19" font-family="Liberation Sans" font-weight="bold" font-size="11" fill="#fff">W</text></svg>
<div class="a" style="left:450px;top:1040px;width:28px;height:27px;background:#1f0233;border:2px solid #e27cff"></div>
<div class="t" style="left:455px;top:1045px;font-size:16px;color:#e27cff">Pr</div>
<svg class="a" style="left:1584px;top:1050px" width="18" height="10"><path d="M1 9L9 1L17 9" fill="none" stroke="#fff" stroke-width="1.3"/></svg>
<svg class="a" style="left:1612px;top:1048px" width="22" height="14"><path d="M1 2V5H5M3 2V4" stroke="#fff" stroke-width="1.2" fill="none"/><rect x="4" y="4" width="15" height="9" fill="none" stroke="#fff" stroke-width="1.3"/><rect x="5.5" y="5.5" width="12" height="6" fill="#fff"/><rect x="19" y="6.5" width="2" height="4" fill="#fff"/></svg>
<svg class="a" style="left:1642px;top:1047px" width="22" height="17"><path d="M1 5.5H5L10 1.5V15.5L5 11.5H1Z" fill="none" stroke="#fff" stroke-width="1.3"/><path d="M13 5Q15 8.5 13 12M16 3Q19.5 8.5 16 14" fill="none" stroke="#fff" stroke-width="1.3"/><path d="M19 1Q23.5 8.5 19 16" fill="none" stroke="#888" stroke-width="1.3"/></svg>
<svg class="a" style="left:1675px;top:1047px" width="18" height="17"><path d="M1 16Q1 3 16 2M4.5 16Q4.5 6.5 16 5.5M8 16Q8 10 16 9M11.5 16Q11.5 13 14 12.5" fill="none" stroke="#fff" stroke-width="1.2"/><circle cx="14.5" cy="15" r="1.5" fill="#fff"/></svg>
<div class="t" style="left:1703px;top:1046px;font-size:17px;color:#fff">中</div>
<svg class="a" style="left:1729px;top:1040px" width="30" height="30"><circle cx="15" cy="15" r="13" fill="none" stroke="#333" stroke-width="2.2"/><path d="M15 2A13 13 0 0 1 24 24" fill="none" stroke="#3cb6a0" stroke-width="2.2"/><path d="M24 24A13 13 0 0 1 4 22" fill="none" stroke="#c9d64a" stroke-width="2.2"/></svg>
<div class="t" style="left:1733px;top:1047px;font-size:17px;font-weight:bold;color:#e8e8e8">63</div>
<div class="t" style="left:1786px;top:1036px;font-size:16px;color:#fff">22:48</div>
<div class="t" style="left:1773px;top:1059px;font-size:16px;color:#fff">2017/6/4</div>
<svg class="a" style="left:1868px;top:1045px" width="22" height="20"><path d="M1 1H21V15H14L11 18L8 15H1Z" fill="none" stroke="#fff" stroke-width="1.3"/></svg>
<div class="a" style="left:1914px;top:1030px;width:1px;height:50px;background:#555"></div>
<svg class="a" style="left:1626px;top:956px" width="82" height="68" viewBox="0 0 82 68"><path d="M30 3C15 3 3 13 3 26C3 33 7 39 13 43L10 52L21 46C24 47 27 48 30 48C45 48 57 38 57 26C57 13 45 3 30 3Z" fill="#e6e6e6"/><circle cx="20" cy="19" r="3.4" fill="#222"/><circle cx="41" cy="19" r="3.4" fill="#222"/><path d="M55 23C42 23 31 32 31 44C31 56 42 65 55 65C58 65 60 64.5 63 63.5L73 68L70 59C76 55 79 50 79 44C79 32 68 23 55 23Z" fill="#e6e6e6" stroke="#1e1e1e" stroke-width="2.5"/><circle cx="47" cy="37" r="3.2" fill="#222"/><circle cx="64" cy="37" r="3.2" fill="#222"/></svg>
<div class="t" style="left:1714px;top:968px;font-size:47.6px;color:#fff;font-weight:300">影像狗</div>
<!-- menu -->
<div class="a" style="left:67px;top:24px;width:300px;height:1006px;background:#f1f1f1;border:1px solid #a8a8a8;box-shadow:1px 1px 1px rgba(0,0,0,0.6)"></div>
<div class="a" style="left:70px;top:580px;width:294px;height:24px;background:#91c9f7"></div>
<!-- menu items -->
<div class="t mi" style="top:31px;color:#6d6d6d">剪切</div>
<div class="t mi" style="top:55px;color:#000">复制</div>
<div class="t mi" style="top:79px;color:#6d6d6d">粘贴</div>
<div class="t mi" style="top:103px;color:#000">清除</div>
<div class="a" style="left:100px;top:126px;width:263px;height:1px;background:#d7d7d7"></div>
<div class="t mi" style="top:134px;color:#000">复制</div>
<div class="a" style="left:100px;top:157px;width:263px;height:1px;background:#d7d7d7"></div>
<div class="t mi" style="top:165px;color:#6d6d6d">清除入点和出点(N)</div>
<div class="a" style="left:100px;top:188px;width:263px;height:1px;background:#d7d7d7"></div>
<div class="t mi" style="top:196px;color:#000">隐藏</div>
<div class="t mi" style="top:220px;color:#000">查看隐藏内容</div>
<div class="a" style="left:100px;top:243px;width:263px;height:1px;background:#d7d7d7"></div>
<div class="t mi" style="top:251px;color:#000">修改</div>
<svg class="a" style="left:347px;top:254px" width="8" height="11"><path d="M1.5 1L6 5.5L1.5 10" fill="none" stroke="#333" stroke-width="1.1"/></svg>
<div class="t mi" style="top:275px;color:#000">属性...</div>
<div class="t mi" style="top:299px;color:#6d6d6d">源设置...</div>
<div class="t mi" style="top:323px;color:#6d6d6d">序列设置...</div>
<div class="t mi" style="top:347px;color:#000">在资源管理器中显示...</div>
<div class="t mi" style="top:371px;color:#000">在资源管理器中显示项目...</div>
<div class="t mi" style="top:395px;color:#6d6d6d">显示原稿...</div>
<div class="t mi" style="top:419px;color:#000">重命名</div>
<div class="a" style="left:100px;top:442px;width:263px;height:1px;background:#d7d7d7"></div>
<div class="t mi" style="top:450px;color:#000">插入</div>
<div class="t mi" style="top:474px;color:#000">覆盖</div>
<div class="a" style="left:100px;top:497px;width:263px;height:1px;background:#d7d7d7"></div>
<div class="t mi" style="top:505px;color:#000">从剪辑新建序列</div>
<div class="a" style="left:100px;top:528px;width:263px;height:1px;background:#d7d7d7"></div>
<div class="t mi" style="top:536px;color:#000">替换素材...</div>
<div class="t mi" style="top:560px;color:#6d6d6d">链接媒体...</div>
<div class="t mi" style="top:584px;color:#000">设为脱机...</div>
<div class="t mi" style="top:608px;color:#6d6d6d">脱机编辑(O)...</div>
<div class="t mi" style="top:632px;color:#000">代理</div>
<svg class="a" style="left:347px;top:635px" width="8" height="11"><path d="M1.5 1L6 5.5L1.5 10" fill="none" stroke="#333" stroke-width="1.1"/></svg>
<div class="a" style="left:100px;top:655px;width:263px;height:1px;background:#d7d7d7"></div>
<div class="t mi" style="top:663px;color:#000">速度/持续时间...</div>
<div class="a" style="left:100px;top:686px;width:263px;height:1px;background:#d7d7d7"></div>
<div class="t mi" style="top:694px;color:#000">音频增益...</div>
<div class="a" style="left:100px;top:717px;width:263px;height:1px;background:#d7d7d7"></div>
<div class="t mi" style="top:725px;color:#6d6d6d">禁用主剪辑效果</div>
<div class="a" style="left:100px;top:748px;width:263px;height:1px;background:#d7d7d7"></div>
<div class="t mi" style="top:756px;color:#000">标签</div>
<svg class="a" style="left:347px;top:759px" width="8" height="11"><path d="M1.5 1L6 5.5L1.5 10" fill="none" stroke="#333" stroke-width="1.1"/></svg>
<div class="a" style="left:100px;top:779px;width:263px;height:1px;background:#d7d7d7"></div>
<div class="t mi" style="top:787px;color:#6d6d6d">制作子剪辑</div>
<div class="t mi" style="top:811px;color:#000">编辑子剪辑...</div>
<div class="a" style="left:100px;top:834px;width:263px;height:1px;background:#d7d7d7"></div>
<div class="t mi" style="top:842px;color:#000">在源监视器中打开</div>
<div class="t mi" style="top:866px;color:#6d6d6d">在时间轴内打开</div>
<div class="a" style="left:100px;top:889px;width:263px;height:1px;background:#d7d7d7"></div>
<div class="t mi" style="top:897px;color:#000">设置标识帧</div>
<div class="a" style="left:100px;top:920px;width:263px;height:1px;background:#d7d7d7"></div>
<div class="t mi" style="top:928px;color:#000">编辑原始</div>
<div class="t mi" style="top:952px;color:#000">在<span style="letter-spacing:1.05px"> Adobe Audition </span>中编辑</div>
<svg class="a" style="left:347px;top:955px" width="8" height="11"><path d="M1.5 1L6 5.5L1.5 10" fill="none" stroke="#333" stroke-width="1.1"/></svg>
<div class="t mi" style="top:976px;color:#6d6d6d">在<span style="letter-spacing:0.85px"> Adobe Photoshop </span>中编辑</div>
<div class="a" style="left:100px;top:999px;width:263px;height:1px;background:#d7d7d7"></div>
<div class="t mi" style="top:1007px;color:#000">导出媒体...</div>
</body></html>
